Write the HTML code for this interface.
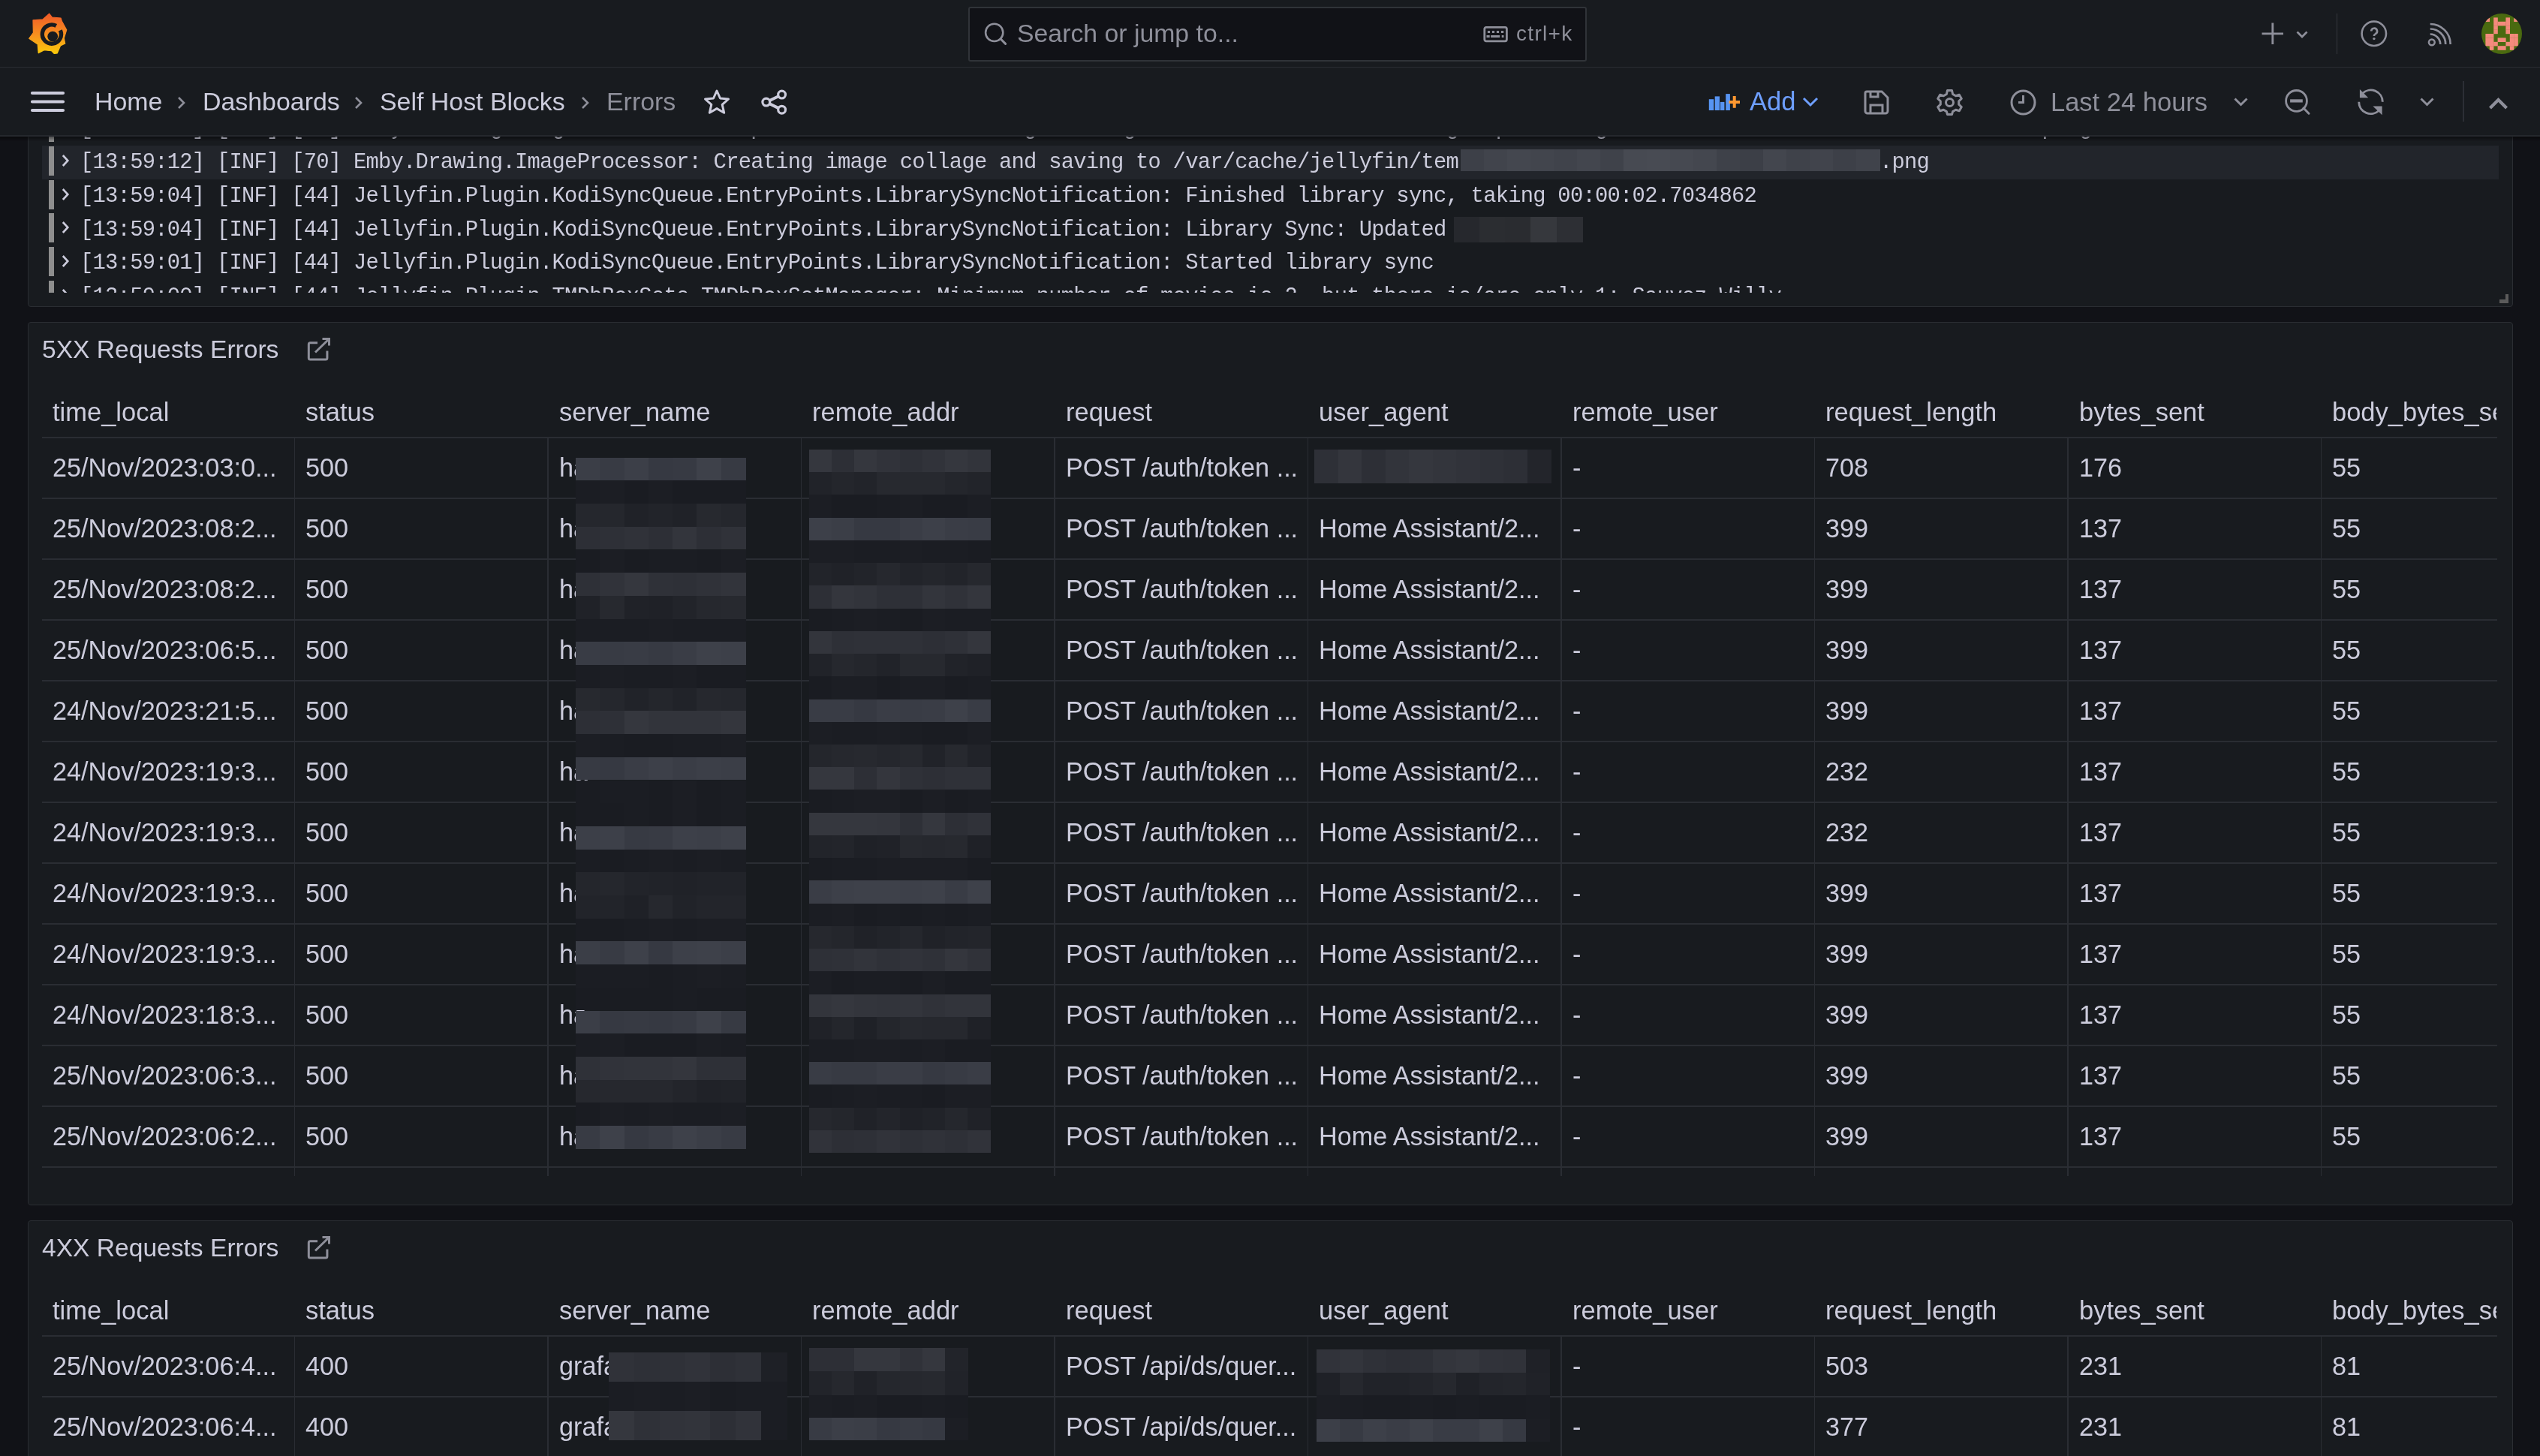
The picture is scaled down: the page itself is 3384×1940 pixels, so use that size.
<!DOCTYPE html><html><head><meta charset="utf-8"><style>html,body{margin:0;padding:0;} div{-webkit-font-smoothing:antialiased;} .t{will-change:transform;}body{width:3384px;height:1940px;overflow:hidden;position:relative;background:#111217;font-family:'Liberation Sans', sans-serif;}</style></head><body>
<div style="position:absolute;left:37px;top:60px;width:3309px;height:347px;background:#181b1f;border:1px solid #2a2d32;border-radius:4px;"></div>
<div style="position:absolute;left:0;top:181px;width:3384px;height:209px;overflow:hidden;">
<div style="position:absolute;left:65px;top:-30.72px;width:7px;height:39px;background:#8e8e8e;"></div>
<svg style="position:absolute;left:80px;top:-20.72px;" width="14" height="20" viewBox="0 0 14 20"><path d="M3.8 2 L10.3 9 L3.8 16" fill="none" stroke="#ccccdc" stroke-width="2.6"/></svg>
<div class="t" style="position:absolute;left:107.3px;top:-22.59px;font-family:'Liberation Mono', monospace;font-size:28.8px;line-height:28.8px;color:#ccccdc;white-space:pre;letter-spacing:-0.74px;">[13:59:12] [INF] [70] Emby.Drawing.ImageProcessor:    p                     g       g                         g   p       g                                   p  g</div>
<div style="position:absolute;left:56px;top:13.0px;width:3273px;height:44.72px;background:#22252b;"></div>
<div style="position:absolute;left:65px;top:14.0px;width:7px;height:39px;background:#8e8e8e;"></div>
<svg style="position:absolute;left:80px;top:24.0px;" width="14" height="20" viewBox="0 0 14 20"><path d="M3.8 2 L10.3 9 L3.8 16" fill="none" stroke="#ccccdc" stroke-width="2.6"/></svg>
<div class="t" style="position:absolute;left:107.3px;top:22.13px;font-family:'Liberation Mono', monospace;font-size:28.8px;line-height:28.8px;color:#ccccdc;white-space:pre;letter-spacing:-0.74px;">[13:59:12] [INF] [70] Emby.Drawing.ImageProcessor: Creating image collage and saving to /var/cache/jellyfin/tem</div>
<div style="position:absolute;left:1945.5px;top:17.8px;width:31.6px;height:29.7px;background:#3d4048;"></div>
<div style="position:absolute;left:1976.53px;top:17.8px;width:31.6px;height:29.7px;background:#41444c;"></div>
<div style="position:absolute;left:2007.56px;top:17.8px;width:31.6px;height:29.7px;background:#44474f;"></div>
<div style="position:absolute;left:2038.59px;top:17.8px;width:31.6px;height:29.7px;background:#42454d;"></div>
<div style="position:absolute;left:2069.62px;top:17.8px;width:31.6px;height:29.7px;background:#40434b;"></div>
<div style="position:absolute;left:2100.65px;top:17.8px;width:31.6px;height:29.7px;background:#43464e;"></div>
<div style="position:absolute;left:2131.68px;top:17.8px;width:31.6px;height:29.7px;background:#3f424a;"></div>
<div style="position:absolute;left:2162.71px;top:17.8px;width:31.6px;height:29.7px;background:#474a52;"></div>
<div style="position:absolute;left:2193.74px;top:17.8px;width:31.6px;height:29.7px;background:#484b53;"></div>
<div style="position:absolute;left:2224.77px;top:17.8px;width:31.6px;height:29.7px;background:#464951;"></div>
<div style="position:absolute;left:2255.8px;top:17.8px;width:31.6px;height:29.7px;background:#44474f;"></div>
<div style="position:absolute;left:2286.83px;top:17.8px;width:31.6px;height:29.7px;background:#3e4149;"></div>
<div style="position:absolute;left:2317.86px;top:17.8px;width:31.6px;height:29.7px;background:#3c3f47;"></div>
<div style="position:absolute;left:2348.89px;top:17.8px;width:31.6px;height:29.7px;background:#43464e;"></div>
<div style="position:absolute;left:2379.92px;top:17.8px;width:31.6px;height:29.7px;background:#3f424a;"></div>
<div style="position:absolute;left:2410.95px;top:17.8px;width:31.6px;height:29.7px;background:#41444c;"></div>
<div style="position:absolute;left:2441.98px;top:17.8px;width:31.6px;height:29.7px;background:#3d4048;"></div>
<div style="position:absolute;left:2473.01px;top:17.8px;width:31.6px;height:29.7px;background:#40434b;"></div>
<div class="t" style="position:absolute;left:2504px;top:22.13px;font-family:'Liberation Mono', monospace;font-size:28.8px;line-height:28.8px;color:#ccccdc;white-space:pre;letter-spacing:-0.74px;">.png</div>
<div style="position:absolute;left:65px;top:58.72px;width:7px;height:39px;background:#8e8e8e;"></div>
<svg style="position:absolute;left:80px;top:68.72px;" width="14" height="20" viewBox="0 0 14 20"><path d="M3.8 2 L10.3 9 L3.8 16" fill="none" stroke="#ccccdc" stroke-width="2.6"/></svg>
<div class="t" style="position:absolute;left:107.3px;top:66.85px;font-family:'Liberation Mono', monospace;font-size:28.8px;line-height:28.8px;color:#ccccdc;white-space:pre;letter-spacing:-0.74px;">[13:59:04] [INF] [44] Jellyfin.Plugin.KodiSyncQueue.EntryPoints.LibrarySyncNotification: Finished library sync, taking 00:00:02.7034862</div>
<div style="position:absolute;left:65px;top:103.44px;width:7px;height:39px;background:#8e8e8e;"></div>
<svg style="position:absolute;left:80px;top:113.44px;" width="14" height="20" viewBox="0 0 14 20"><path d="M3.8 2 L10.3 9 L3.8 16" fill="none" stroke="#ccccdc" stroke-width="2.6"/></svg>
<div class="t" style="position:absolute;left:107.3px;top:111.57px;font-family:'Liberation Mono', monospace;font-size:28.8px;line-height:28.8px;color:#ccccdc;white-space:pre;letter-spacing:-0.74px;">[13:59:04] [INF] [44] Jellyfin.Plugin.KodiSyncQueue.EntryPoints.LibrarySyncNotification: Library Sync: Updated</div>
<div style="position:absolute;left:1936.7px;top:108.14px;width:34.8px;height:33.6px;background:#26282d;"></div>
<div style="position:absolute;left:1970.96px;top:108.14px;width:34.8px;height:33.6px;background:#2b2d31;"></div>
<div style="position:absolute;left:2005.22px;top:108.14px;width:34.8px;height:33.6px;background:#2a2c30;"></div>
<div style="position:absolute;left:2039.48px;top:108.14px;width:34.8px;height:33.6px;background:#36383d;"></div>
<div style="position:absolute;left:2073.74px;top:108.14px;width:34.8px;height:33.6px;background:#2d2f34;"></div>
<div style="position:absolute;left:65px;top:148.15999999999997px;width:7px;height:39px;background:#8e8e8e;"></div>
<svg style="position:absolute;left:80px;top:158.15999999999997px;" width="14" height="20" viewBox="0 0 14 20"><path d="M3.8 2 L10.3 9 L3.8 16" fill="none" stroke="#ccccdc" stroke-width="2.6"/></svg>
<div class="t" style="position:absolute;left:107.3px;top:156.29px;font-family:'Liberation Mono', monospace;font-size:28.8px;line-height:28.8px;color:#ccccdc;white-space:pre;letter-spacing:-0.74px;">[13:59:01] [INF] [44] Jellyfin.Plugin.KodiSyncQueue.EntryPoints.LibrarySyncNotification: Started library sync</div>
<div style="position:absolute;left:65px;top:192.88px;width:7px;height:39px;background:#8e8e8e;"></div>
<svg style="position:absolute;left:80px;top:202.88px;" width="14" height="20" viewBox="0 0 14 20"><path d="M3.8 2 L10.3 9 L3.8 16" fill="none" stroke="#ccccdc" stroke-width="2.6"/></svg>
<div class="t" style="position:absolute;left:107.3px;top:201.01px;font-family:'Liberation Mono', monospace;font-size:28.8px;line-height:28.8px;color:#ccccdc;white-space:pre;letter-spacing:-0.74px;">[13:59:00] [INF] [44] Jellyfin.Plugin.TMDbBoxSets.TMDbBoxSetManager: Minimum number of movies is 2, but there is/are only 1: Sauvez Willy</div>
</div>
<div style="position:absolute;left:3338px;top:392px;width:4.2px;height:12.2px;background:#5b5b5b;"></div>
<div style="position:absolute;left:3329.8px;top:399.2px;width:12.4px;height:5px;background:#5b5b5b;"></div>
<div style="position:absolute;left:37px;top:428.7px;width:3309px;height:1175.3px;background:#181b1f;border:1px solid #2a2d32;border-radius:4px;"></div>
<div class="t" style="position:absolute;left:56.3px;top:449.06px;font-family:'Liberation Sans', sans-serif;font-size:33.6px;line-height:33.6px;color:#ccccdc;white-space:pre;">5XX Requests Errors</div>
<svg style="position:absolute;left:409px;top:449.7px;" width="32" height="32" viewBox="0 0 32 32"><path d="M14 6.8 H4.3 a2 2 0 0 0 -2 2 V27 a2 2 0 0 0 2 2 H24.9 a2 2 0 0 0 2 -2 V17.5" fill="none" stroke="#8e8f9a" stroke-width="3"/><path d="M11 19.5 L29.5 1.5 M20.5 1.5 H29.5 V10.5" fill="none" stroke="#8e8f9a" stroke-width="3"/></svg>
<div style="position:absolute;left:69.7px;top:522.0px;width:3256.3px;overflow:hidden;height:60px">
<div class="t" style="position:absolute;left:0px;top:10.00px;font-family:'Liberation Sans', sans-serif;font-size:34.5px;line-height:34.5px;color:#ccccdc;white-space:pre;">time_local</div>
</div>
<div style="position:absolute;left:407.2px;top:522.0px;width:2918.8px;overflow:hidden;height:60px">
<div class="t" style="position:absolute;left:0px;top:10.00px;font-family:'Liberation Sans', sans-serif;font-size:34.5px;line-height:34.5px;color:#ccccdc;white-space:pre;">status</div>
</div>
<div style="position:absolute;left:744.7px;top:522.0px;width:2581.3px;overflow:hidden;height:60px">
<div class="t" style="position:absolute;left:0px;top:10.00px;font-family:'Liberation Sans', sans-serif;font-size:34.5px;line-height:34.5px;color:#ccccdc;white-space:pre;">server_name</div>
</div>
<div style="position:absolute;left:1082.2px;top:522.0px;width:2243.8px;overflow:hidden;height:60px">
<div class="t" style="position:absolute;left:0px;top:10.00px;font-family:'Liberation Sans', sans-serif;font-size:34.5px;line-height:34.5px;color:#ccccdc;white-space:pre;">remote_addr</div>
</div>
<div style="position:absolute;left:1419.7px;top:522.0px;width:1906.3px;overflow:hidden;height:60px">
<div class="t" style="position:absolute;left:0px;top:10.00px;font-family:'Liberation Sans', sans-serif;font-size:34.5px;line-height:34.5px;color:#ccccdc;white-space:pre;">request</div>
</div>
<div style="position:absolute;left:1757.2px;top:522.0px;width:1568.8px;overflow:hidden;height:60px">
<div class="t" style="position:absolute;left:0px;top:10.00px;font-family:'Liberation Sans', sans-serif;font-size:34.5px;line-height:34.5px;color:#ccccdc;white-space:pre;">user_agent</div>
</div>
<div style="position:absolute;left:2094.7px;top:522.0px;width:1231.3000000000002px;overflow:hidden;height:60px">
<div class="t" style="position:absolute;left:0px;top:10.00px;font-family:'Liberation Sans', sans-serif;font-size:34.5px;line-height:34.5px;color:#ccccdc;white-space:pre;">remote_user</div>
</div>
<div style="position:absolute;left:2432.2px;top:522.0px;width:893.8000000000002px;overflow:hidden;height:60px">
<div class="t" style="position:absolute;left:0px;top:10.00px;font-family:'Liberation Sans', sans-serif;font-size:34.5px;line-height:34.5px;color:#ccccdc;white-space:pre;">request_length</div>
</div>
<div style="position:absolute;left:2769.7px;top:522.0px;width:556.3000000000002px;overflow:hidden;height:60px">
<div class="t" style="position:absolute;left:0px;top:10.00px;font-family:'Liberation Sans', sans-serif;font-size:34.5px;line-height:34.5px;color:#ccccdc;white-space:pre;">bytes_sent</div>
</div>
<div style="position:absolute;left:3107.2px;top:522.0px;width:218.80000000000018px;overflow:hidden;height:60px">
<div class="t" style="position:absolute;left:0px;top:10.00px;font-family:'Liberation Sans', sans-serif;font-size:34.5px;line-height:34.5px;color:#ccccdc;white-space:pre;">body_bytes_se</div>
</div>
<div style="position:absolute;left:56px;top:582.0px;width:3271px;height:2px;background:#2a2d33;"></div>
<div style="position:absolute;left:56px;top:662.98px;width:3271px;height:2px;background:#2a2d33;"></div>
<div class="t" style="position:absolute;left:69.7px;top:606.05px;font-family:'Liberation Sans', sans-serif;font-size:34.2px;line-height:34.2px;color:#ccccdc;white-space:pre;">25/Nov/2023:03:0...</div>
<div class="t" style="position:absolute;left:407.2px;top:606.05px;font-family:'Liberation Sans', sans-serif;font-size:34.2px;line-height:34.2px;color:#ccccdc;white-space:pre;">500</div>
<div class="t" style="position:absolute;left:744.7px;top:606.05px;font-family:'Liberation Sans', sans-serif;font-size:34.2px;line-height:34.2px;color:#ccccdc;white-space:pre;">ha</div>
<div class="t" style="position:absolute;left:1419.7px;top:606.05px;font-family:'Liberation Sans', sans-serif;font-size:34.2px;line-height:34.2px;color:#ccccdc;white-space:pre;">POST /auth/token ...</div>
<div class="t" style="position:absolute;left:2094.7px;top:606.05px;font-family:'Liberation Sans', sans-serif;font-size:34.2px;line-height:34.2px;color:#ccccdc;white-space:pre;">-</div>
<div class="t" style="position:absolute;left:2432.2px;top:606.05px;font-family:'Liberation Sans', sans-serif;font-size:34.2px;line-height:34.2px;color:#ccccdc;white-space:pre;">708</div>
<div class="t" style="position:absolute;left:2769.7px;top:606.05px;font-family:'Liberation Sans', sans-serif;font-size:34.2px;line-height:34.2px;color:#ccccdc;white-space:pre;">176</div>
<div class="t" style="position:absolute;left:3107.2px;top:606.05px;font-family:'Liberation Sans', sans-serif;font-size:34.2px;line-height:34.2px;color:#ccccdc;white-space:pre;">55</div>
<div style="position:absolute;left:56px;top:743.96px;width:3271px;height:2px;background:#2a2d33;"></div>
<div class="t" style="position:absolute;left:69.7px;top:687.03px;font-family:'Liberation Sans', sans-serif;font-size:34.2px;line-height:34.2px;color:#ccccdc;white-space:pre;">25/Nov/2023:08:2...</div>
<div class="t" style="position:absolute;left:407.2px;top:687.03px;font-family:'Liberation Sans', sans-serif;font-size:34.2px;line-height:34.2px;color:#ccccdc;white-space:pre;">500</div>
<div class="t" style="position:absolute;left:744.7px;top:687.03px;font-family:'Liberation Sans', sans-serif;font-size:34.2px;line-height:34.2px;color:#ccccdc;white-space:pre;">ha</div>
<div class="t" style="position:absolute;left:1419.7px;top:687.03px;font-family:'Liberation Sans', sans-serif;font-size:34.2px;line-height:34.2px;color:#ccccdc;white-space:pre;">POST /auth/token ...</div>
<div class="t" style="position:absolute;left:1757.2px;top:687.03px;font-family:'Liberation Sans', sans-serif;font-size:34.2px;line-height:34.2px;color:#ccccdc;white-space:pre;">Home Assistant/2...</div>
<div class="t" style="position:absolute;left:2094.7px;top:687.03px;font-family:'Liberation Sans', sans-serif;font-size:34.2px;line-height:34.2px;color:#ccccdc;white-space:pre;">-</div>
<div class="t" style="position:absolute;left:2432.2px;top:687.03px;font-family:'Liberation Sans', sans-serif;font-size:34.2px;line-height:34.2px;color:#ccccdc;white-space:pre;">399</div>
<div class="t" style="position:absolute;left:2769.7px;top:687.03px;font-family:'Liberation Sans', sans-serif;font-size:34.2px;line-height:34.2px;color:#ccccdc;white-space:pre;">137</div>
<div class="t" style="position:absolute;left:3107.2px;top:687.03px;font-family:'Liberation Sans', sans-serif;font-size:34.2px;line-height:34.2px;color:#ccccdc;white-space:pre;">55</div>
<div style="position:absolute;left:56px;top:824.94px;width:3271px;height:2px;background:#2a2d33;"></div>
<div class="t" style="position:absolute;left:69.7px;top:768.01px;font-family:'Liberation Sans', sans-serif;font-size:34.2px;line-height:34.2px;color:#ccccdc;white-space:pre;">25/Nov/2023:08:2...</div>
<div class="t" style="position:absolute;left:407.2px;top:768.01px;font-family:'Liberation Sans', sans-serif;font-size:34.2px;line-height:34.2px;color:#ccccdc;white-space:pre;">500</div>
<div class="t" style="position:absolute;left:744.7px;top:768.01px;font-family:'Liberation Sans', sans-serif;font-size:34.2px;line-height:34.2px;color:#ccccdc;white-space:pre;">ha</div>
<div class="t" style="position:absolute;left:1419.7px;top:768.01px;font-family:'Liberation Sans', sans-serif;font-size:34.2px;line-height:34.2px;color:#ccccdc;white-space:pre;">POST /auth/token ...</div>
<div class="t" style="position:absolute;left:1757.2px;top:768.01px;font-family:'Liberation Sans', sans-serif;font-size:34.2px;line-height:34.2px;color:#ccccdc;white-space:pre;">Home Assistant/2...</div>
<div class="t" style="position:absolute;left:2094.7px;top:768.01px;font-family:'Liberation Sans', sans-serif;font-size:34.2px;line-height:34.2px;color:#ccccdc;white-space:pre;">-</div>
<div class="t" style="position:absolute;left:2432.2px;top:768.01px;font-family:'Liberation Sans', sans-serif;font-size:34.2px;line-height:34.2px;color:#ccccdc;white-space:pre;">399</div>
<div class="t" style="position:absolute;left:2769.7px;top:768.01px;font-family:'Liberation Sans', sans-serif;font-size:34.2px;line-height:34.2px;color:#ccccdc;white-space:pre;">137</div>
<div class="t" style="position:absolute;left:3107.2px;top:768.01px;font-family:'Liberation Sans', sans-serif;font-size:34.2px;line-height:34.2px;color:#ccccdc;white-space:pre;">55</div>
<div style="position:absolute;left:56px;top:905.9200000000001px;width:3271px;height:2px;background:#2a2d33;"></div>
<div class="t" style="position:absolute;left:69.7px;top:848.99px;font-family:'Liberation Sans', sans-serif;font-size:34.2px;line-height:34.2px;color:#ccccdc;white-space:pre;">25/Nov/2023:06:5...</div>
<div class="t" style="position:absolute;left:407.2px;top:848.99px;font-family:'Liberation Sans', sans-serif;font-size:34.2px;line-height:34.2px;color:#ccccdc;white-space:pre;">500</div>
<div class="t" style="position:absolute;left:744.7px;top:848.99px;font-family:'Liberation Sans', sans-serif;font-size:34.2px;line-height:34.2px;color:#ccccdc;white-space:pre;">ha</div>
<div class="t" style="position:absolute;left:1419.7px;top:848.99px;font-family:'Liberation Sans', sans-serif;font-size:34.2px;line-height:34.2px;color:#ccccdc;white-space:pre;">POST /auth/token ...</div>
<div class="t" style="position:absolute;left:1757.2px;top:848.99px;font-family:'Liberation Sans', sans-serif;font-size:34.2px;line-height:34.2px;color:#ccccdc;white-space:pre;">Home Assistant/2...</div>
<div class="t" style="position:absolute;left:2094.7px;top:848.99px;font-family:'Liberation Sans', sans-serif;font-size:34.2px;line-height:34.2px;color:#ccccdc;white-space:pre;">-</div>
<div class="t" style="position:absolute;left:2432.2px;top:848.99px;font-family:'Liberation Sans', sans-serif;font-size:34.2px;line-height:34.2px;color:#ccccdc;white-space:pre;">399</div>
<div class="t" style="position:absolute;left:2769.7px;top:848.99px;font-family:'Liberation Sans', sans-serif;font-size:34.2px;line-height:34.2px;color:#ccccdc;white-space:pre;">137</div>
<div class="t" style="position:absolute;left:3107.2px;top:848.99px;font-family:'Liberation Sans', sans-serif;font-size:34.2px;line-height:34.2px;color:#ccccdc;white-space:pre;">55</div>
<div style="position:absolute;left:56px;top:986.9000000000001px;width:3271px;height:2px;background:#2a2d33;"></div>
<div class="t" style="position:absolute;left:69.7px;top:929.97px;font-family:'Liberation Sans', sans-serif;font-size:34.2px;line-height:34.2px;color:#ccccdc;white-space:pre;">24/Nov/2023:21:5...</div>
<div class="t" style="position:absolute;left:407.2px;top:929.97px;font-family:'Liberation Sans', sans-serif;font-size:34.2px;line-height:34.2px;color:#ccccdc;white-space:pre;">500</div>
<div class="t" style="position:absolute;left:744.7px;top:929.97px;font-family:'Liberation Sans', sans-serif;font-size:34.2px;line-height:34.2px;color:#ccccdc;white-space:pre;">ha</div>
<div class="t" style="position:absolute;left:1419.7px;top:929.97px;font-family:'Liberation Sans', sans-serif;font-size:34.2px;line-height:34.2px;color:#ccccdc;white-space:pre;">POST /auth/token ...</div>
<div class="t" style="position:absolute;left:1757.2px;top:929.97px;font-family:'Liberation Sans', sans-serif;font-size:34.2px;line-height:34.2px;color:#ccccdc;white-space:pre;">Home Assistant/2...</div>
<div class="t" style="position:absolute;left:2094.7px;top:929.97px;font-family:'Liberation Sans', sans-serif;font-size:34.2px;line-height:34.2px;color:#ccccdc;white-space:pre;">-</div>
<div class="t" style="position:absolute;left:2432.2px;top:929.97px;font-family:'Liberation Sans', sans-serif;font-size:34.2px;line-height:34.2px;color:#ccccdc;white-space:pre;">399</div>
<div class="t" style="position:absolute;left:2769.7px;top:929.97px;font-family:'Liberation Sans', sans-serif;font-size:34.2px;line-height:34.2px;color:#ccccdc;white-space:pre;">137</div>
<div class="t" style="position:absolute;left:3107.2px;top:929.97px;font-family:'Liberation Sans', sans-serif;font-size:34.2px;line-height:34.2px;color:#ccccdc;white-space:pre;">55</div>
<div style="position:absolute;left:56px;top:1067.88px;width:3271px;height:2px;background:#2a2d33;"></div>
<div class="t" style="position:absolute;left:69.7px;top:1010.95px;font-family:'Liberation Sans', sans-serif;font-size:34.2px;line-height:34.2px;color:#ccccdc;white-space:pre;">24/Nov/2023:19:3...</div>
<div class="t" style="position:absolute;left:407.2px;top:1010.95px;font-family:'Liberation Sans', sans-serif;font-size:34.2px;line-height:34.2px;color:#ccccdc;white-space:pre;">500</div>
<div class="t" style="position:absolute;left:744.7px;top:1010.95px;font-family:'Liberation Sans', sans-serif;font-size:34.2px;line-height:34.2px;color:#ccccdc;white-space:pre;">ha</div>
<div class="t" style="position:absolute;left:1419.7px;top:1010.95px;font-family:'Liberation Sans', sans-serif;font-size:34.2px;line-height:34.2px;color:#ccccdc;white-space:pre;">POST /auth/token ...</div>
<div class="t" style="position:absolute;left:1757.2px;top:1010.95px;font-family:'Liberation Sans', sans-serif;font-size:34.2px;line-height:34.2px;color:#ccccdc;white-space:pre;">Home Assistant/2...</div>
<div class="t" style="position:absolute;left:2094.7px;top:1010.95px;font-family:'Liberation Sans', sans-serif;font-size:34.2px;line-height:34.2px;color:#ccccdc;white-space:pre;">-</div>
<div class="t" style="position:absolute;left:2432.2px;top:1010.95px;font-family:'Liberation Sans', sans-serif;font-size:34.2px;line-height:34.2px;color:#ccccdc;white-space:pre;">232</div>
<div class="t" style="position:absolute;left:2769.7px;top:1010.95px;font-family:'Liberation Sans', sans-serif;font-size:34.2px;line-height:34.2px;color:#ccccdc;white-space:pre;">137</div>
<div class="t" style="position:absolute;left:3107.2px;top:1010.95px;font-family:'Liberation Sans', sans-serif;font-size:34.2px;line-height:34.2px;color:#ccccdc;white-space:pre;">55</div>
<div style="position:absolute;left:56px;top:1148.8600000000001px;width:3271px;height:2px;background:#2a2d33;"></div>
<div class="t" style="position:absolute;left:69.7px;top:1091.93px;font-family:'Liberation Sans', sans-serif;font-size:34.2px;line-height:34.2px;color:#ccccdc;white-space:pre;">24/Nov/2023:19:3...</div>
<div class="t" style="position:absolute;left:407.2px;top:1091.93px;font-family:'Liberation Sans', sans-serif;font-size:34.2px;line-height:34.2px;color:#ccccdc;white-space:pre;">500</div>
<div class="t" style="position:absolute;left:744.7px;top:1091.93px;font-family:'Liberation Sans', sans-serif;font-size:34.2px;line-height:34.2px;color:#ccccdc;white-space:pre;">ha</div>
<div class="t" style="position:absolute;left:1419.7px;top:1091.93px;font-family:'Liberation Sans', sans-serif;font-size:34.2px;line-height:34.2px;color:#ccccdc;white-space:pre;">POST /auth/token ...</div>
<div class="t" style="position:absolute;left:1757.2px;top:1091.93px;font-family:'Liberation Sans', sans-serif;font-size:34.2px;line-height:34.2px;color:#ccccdc;white-space:pre;">Home Assistant/2...</div>
<div class="t" style="position:absolute;left:2094.7px;top:1091.93px;font-family:'Liberation Sans', sans-serif;font-size:34.2px;line-height:34.2px;color:#ccccdc;white-space:pre;">-</div>
<div class="t" style="position:absolute;left:2432.2px;top:1091.93px;font-family:'Liberation Sans', sans-serif;font-size:34.2px;line-height:34.2px;color:#ccccdc;white-space:pre;">232</div>
<div class="t" style="position:absolute;left:2769.7px;top:1091.93px;font-family:'Liberation Sans', sans-serif;font-size:34.2px;line-height:34.2px;color:#ccccdc;white-space:pre;">137</div>
<div class="t" style="position:absolute;left:3107.2px;top:1091.93px;font-family:'Liberation Sans', sans-serif;font-size:34.2px;line-height:34.2px;color:#ccccdc;white-space:pre;">55</div>
<div style="position:absolute;left:56px;top:1229.8400000000001px;width:3271px;height:2px;background:#2a2d33;"></div>
<div class="t" style="position:absolute;left:69.7px;top:1172.91px;font-family:'Liberation Sans', sans-serif;font-size:34.2px;line-height:34.2px;color:#ccccdc;white-space:pre;">24/Nov/2023:19:3...</div>
<div class="t" style="position:absolute;left:407.2px;top:1172.91px;font-family:'Liberation Sans', sans-serif;font-size:34.2px;line-height:34.2px;color:#ccccdc;white-space:pre;">500</div>
<div class="t" style="position:absolute;left:744.7px;top:1172.91px;font-family:'Liberation Sans', sans-serif;font-size:34.2px;line-height:34.2px;color:#ccccdc;white-space:pre;">ha</div>
<div class="t" style="position:absolute;left:1419.7px;top:1172.91px;font-family:'Liberation Sans', sans-serif;font-size:34.2px;line-height:34.2px;color:#ccccdc;white-space:pre;">POST /auth/token ...</div>
<div class="t" style="position:absolute;left:1757.2px;top:1172.91px;font-family:'Liberation Sans', sans-serif;font-size:34.2px;line-height:34.2px;color:#ccccdc;white-space:pre;">Home Assistant/2...</div>
<div class="t" style="position:absolute;left:2094.7px;top:1172.91px;font-family:'Liberation Sans', sans-serif;font-size:34.2px;line-height:34.2px;color:#ccccdc;white-space:pre;">-</div>
<div class="t" style="position:absolute;left:2432.2px;top:1172.91px;font-family:'Liberation Sans', sans-serif;font-size:34.2px;line-height:34.2px;color:#ccccdc;white-space:pre;">399</div>
<div class="t" style="position:absolute;left:2769.7px;top:1172.91px;font-family:'Liberation Sans', sans-serif;font-size:34.2px;line-height:34.2px;color:#ccccdc;white-space:pre;">137</div>
<div class="t" style="position:absolute;left:3107.2px;top:1172.91px;font-family:'Liberation Sans', sans-serif;font-size:34.2px;line-height:34.2px;color:#ccccdc;white-space:pre;">55</div>
<div style="position:absolute;left:56px;top:1310.8200000000002px;width:3271px;height:2px;background:#2a2d33;"></div>
<div class="t" style="position:absolute;left:69.7px;top:1253.89px;font-family:'Liberation Sans', sans-serif;font-size:34.2px;line-height:34.2px;color:#ccccdc;white-space:pre;">24/Nov/2023:19:3...</div>
<div class="t" style="position:absolute;left:407.2px;top:1253.89px;font-family:'Liberation Sans', sans-serif;font-size:34.2px;line-height:34.2px;color:#ccccdc;white-space:pre;">500</div>
<div class="t" style="position:absolute;left:744.7px;top:1253.89px;font-family:'Liberation Sans', sans-serif;font-size:34.2px;line-height:34.2px;color:#ccccdc;white-space:pre;">ha</div>
<div class="t" style="position:absolute;left:1419.7px;top:1253.89px;font-family:'Liberation Sans', sans-serif;font-size:34.2px;line-height:34.2px;color:#ccccdc;white-space:pre;">POST /auth/token ...</div>
<div class="t" style="position:absolute;left:1757.2px;top:1253.89px;font-family:'Liberation Sans', sans-serif;font-size:34.2px;line-height:34.2px;color:#ccccdc;white-space:pre;">Home Assistant/2...</div>
<div class="t" style="position:absolute;left:2094.7px;top:1253.89px;font-family:'Liberation Sans', sans-serif;font-size:34.2px;line-height:34.2px;color:#ccccdc;white-space:pre;">-</div>
<div class="t" style="position:absolute;left:2432.2px;top:1253.89px;font-family:'Liberation Sans', sans-serif;font-size:34.2px;line-height:34.2px;color:#ccccdc;white-space:pre;">399</div>
<div class="t" style="position:absolute;left:2769.7px;top:1253.89px;font-family:'Liberation Sans', sans-serif;font-size:34.2px;line-height:34.2px;color:#ccccdc;white-space:pre;">137</div>
<div class="t" style="position:absolute;left:3107.2px;top:1253.89px;font-family:'Liberation Sans', sans-serif;font-size:34.2px;line-height:34.2px;color:#ccccdc;white-space:pre;">55</div>
<div style="position:absolute;left:56px;top:1391.8000000000002px;width:3271px;height:2px;background:#2a2d33;"></div>
<div class="t" style="position:absolute;left:69.7px;top:1334.87px;font-family:'Liberation Sans', sans-serif;font-size:34.2px;line-height:34.2px;color:#ccccdc;white-space:pre;">24/Nov/2023:18:3...</div>
<div class="t" style="position:absolute;left:407.2px;top:1334.87px;font-family:'Liberation Sans', sans-serif;font-size:34.2px;line-height:34.2px;color:#ccccdc;white-space:pre;">500</div>
<div class="t" style="position:absolute;left:744.7px;top:1334.87px;font-family:'Liberation Sans', sans-serif;font-size:34.2px;line-height:34.2px;color:#ccccdc;white-space:pre;">ha</div>
<div class="t" style="position:absolute;left:1419.7px;top:1334.87px;font-family:'Liberation Sans', sans-serif;font-size:34.2px;line-height:34.2px;color:#ccccdc;white-space:pre;">POST /auth/token ...</div>
<div class="t" style="position:absolute;left:1757.2px;top:1334.87px;font-family:'Liberation Sans', sans-serif;font-size:34.2px;line-height:34.2px;color:#ccccdc;white-space:pre;">Home Assistant/2...</div>
<div class="t" style="position:absolute;left:2094.7px;top:1334.87px;font-family:'Liberation Sans', sans-serif;font-size:34.2px;line-height:34.2px;color:#ccccdc;white-space:pre;">-</div>
<div class="t" style="position:absolute;left:2432.2px;top:1334.87px;font-family:'Liberation Sans', sans-serif;font-size:34.2px;line-height:34.2px;color:#ccccdc;white-space:pre;">399</div>
<div class="t" style="position:absolute;left:2769.7px;top:1334.87px;font-family:'Liberation Sans', sans-serif;font-size:34.2px;line-height:34.2px;color:#ccccdc;white-space:pre;">137</div>
<div class="t" style="position:absolute;left:3107.2px;top:1334.87px;font-family:'Liberation Sans', sans-serif;font-size:34.2px;line-height:34.2px;color:#ccccdc;white-space:pre;">55</div>
<div style="position:absolute;left:56px;top:1472.7800000000002px;width:3271px;height:2px;background:#2a2d33;"></div>
<div class="t" style="position:absolute;left:69.7px;top:1415.85px;font-family:'Liberation Sans', sans-serif;font-size:34.2px;line-height:34.2px;color:#ccccdc;white-space:pre;">25/Nov/2023:06:3...</div>
<div class="t" style="position:absolute;left:407.2px;top:1415.85px;font-family:'Liberation Sans', sans-serif;font-size:34.2px;line-height:34.2px;color:#ccccdc;white-space:pre;">500</div>
<div class="t" style="position:absolute;left:744.7px;top:1415.85px;font-family:'Liberation Sans', sans-serif;font-size:34.2px;line-height:34.2px;color:#ccccdc;white-space:pre;">ha</div>
<div class="t" style="position:absolute;left:1419.7px;top:1415.85px;font-family:'Liberation Sans', sans-serif;font-size:34.2px;line-height:34.2px;color:#ccccdc;white-space:pre;">POST /auth/token ...</div>
<div class="t" style="position:absolute;left:1757.2px;top:1415.85px;font-family:'Liberation Sans', sans-serif;font-size:34.2px;line-height:34.2px;color:#ccccdc;white-space:pre;">Home Assistant/2...</div>
<div class="t" style="position:absolute;left:2094.7px;top:1415.85px;font-family:'Liberation Sans', sans-serif;font-size:34.2px;line-height:34.2px;color:#ccccdc;white-space:pre;">-</div>
<div class="t" style="position:absolute;left:2432.2px;top:1415.85px;font-family:'Liberation Sans', sans-serif;font-size:34.2px;line-height:34.2px;color:#ccccdc;white-space:pre;">399</div>
<div class="t" style="position:absolute;left:2769.7px;top:1415.85px;font-family:'Liberation Sans', sans-serif;font-size:34.2px;line-height:34.2px;color:#ccccdc;white-space:pre;">137</div>
<div class="t" style="position:absolute;left:3107.2px;top:1415.85px;font-family:'Liberation Sans', sans-serif;font-size:34.2px;line-height:34.2px;color:#ccccdc;white-space:pre;">55</div>
<div style="position:absolute;left:56px;top:1553.7600000000002px;width:3271px;height:2px;background:#2a2d33;"></div>
<div class="t" style="position:absolute;left:69.7px;top:1496.83px;font-family:'Liberation Sans', sans-serif;font-size:34.2px;line-height:34.2px;color:#ccccdc;white-space:pre;">25/Nov/2023:06:2...</div>
<div class="t" style="position:absolute;left:407.2px;top:1496.83px;font-family:'Liberation Sans', sans-serif;font-size:34.2px;line-height:34.2px;color:#ccccdc;white-space:pre;">500</div>
<div class="t" style="position:absolute;left:744.7px;top:1496.83px;font-family:'Liberation Sans', sans-serif;font-size:34.2px;line-height:34.2px;color:#ccccdc;white-space:pre;">ha</div>
<div class="t" style="position:absolute;left:1419.7px;top:1496.83px;font-family:'Liberation Sans', sans-serif;font-size:34.2px;line-height:34.2px;color:#ccccdc;white-space:pre;">POST /auth/token ...</div>
<div class="t" style="position:absolute;left:1757.2px;top:1496.83px;font-family:'Liberation Sans', sans-serif;font-size:34.2px;line-height:34.2px;color:#ccccdc;white-space:pre;">Home Assistant/2...</div>
<div class="t" style="position:absolute;left:2094.7px;top:1496.83px;font-family:'Liberation Sans', sans-serif;font-size:34.2px;line-height:34.2px;color:#ccccdc;white-space:pre;">-</div>
<div class="t" style="position:absolute;left:2432.2px;top:1496.83px;font-family:'Liberation Sans', sans-serif;font-size:34.2px;line-height:34.2px;color:#ccccdc;white-space:pre;">399</div>
<div class="t" style="position:absolute;left:2769.7px;top:1496.83px;font-family:'Liberation Sans', sans-serif;font-size:34.2px;line-height:34.2px;color:#ccccdc;white-space:pre;">137</div>
<div class="t" style="position:absolute;left:3107.2px;top:1496.83px;font-family:'Liberation Sans', sans-serif;font-size:34.2px;line-height:34.2px;color:#ccccdc;white-space:pre;">55</div>
<div style="position:absolute;left:391.59999999999997px;top:583.0px;width:1.5px;height:983.76px;background:#2a2d33;"></div>
<div style="position:absolute;left:729.1px;top:583.0px;width:1.5px;height:983.76px;background:#2a2d33;"></div>
<div style="position:absolute;left:1066.6000000000001px;top:583.0px;width:1.5px;height:983.76px;background:#2a2d33;"></div>
<div style="position:absolute;left:1404.1000000000001px;top:583.0px;width:1.5px;height:983.76px;background:#2a2d33;"></div>
<div style="position:absolute;left:1741.6000000000001px;top:583.0px;width:1.5px;height:983.76px;background:#2a2d33;"></div>
<div style="position:absolute;left:2079.1px;top:583.0px;width:1.5px;height:983.76px;background:#2a2d33;"></div>
<div style="position:absolute;left:2416.6px;top:583.0px;width:1.5px;height:983.76px;background:#2a2d33;"></div>
<div style="position:absolute;left:2754.1px;top:583.0px;width:1.5px;height:983.76px;background:#2a2d33;"></div>
<div style="position:absolute;left:3091.6px;top:583.0px;width:1.5px;height:983.76px;background:#2a2d33;"></div>
<div style="position:absolute;left:37px;top:1626px;width:3309px;height:472px;background:#181b1f;border:1px solid #2a2d32;border-radius:4px;"></div>
<div class="t" style="position:absolute;left:56.3px;top:1646.36px;font-family:'Liberation Sans', sans-serif;font-size:33.6px;line-height:33.6px;color:#ccccdc;white-space:pre;">4XX Requests Errors</div>
<svg style="position:absolute;left:409px;top:1647px;" width="32" height="32" viewBox="0 0 32 32"><path d="M14 6.8 H4.3 a2 2 0 0 0 -2 2 V27 a2 2 0 0 0 2 2 H24.9 a2 2 0 0 0 2 -2 V17.5" fill="none" stroke="#8e8f9a" stroke-width="3"/><path d="M11 19.5 L29.5 1.5 M20.5 1.5 H29.5 V10.5" fill="none" stroke="#8e8f9a" stroke-width="3"/></svg>
<div style="position:absolute;left:69.7px;top:1719.2px;width:3256.3px;overflow:hidden;height:60px">
<div class="t" style="position:absolute;left:0px;top:10.00px;font-family:'Liberation Sans', sans-serif;font-size:34.5px;line-height:34.5px;color:#ccccdc;white-space:pre;">time_local</div>
</div>
<div style="position:absolute;left:407.2px;top:1719.2px;width:2918.8px;overflow:hidden;height:60px">
<div class="t" style="position:absolute;left:0px;top:10.00px;font-family:'Liberation Sans', sans-serif;font-size:34.5px;line-height:34.5px;color:#ccccdc;white-space:pre;">status</div>
</div>
<div style="position:absolute;left:744.7px;top:1719.2px;width:2581.3px;overflow:hidden;height:60px">
<div class="t" style="position:absolute;left:0px;top:10.00px;font-family:'Liberation Sans', sans-serif;font-size:34.5px;line-height:34.5px;color:#ccccdc;white-space:pre;">server_name</div>
</div>
<div style="position:absolute;left:1082.2px;top:1719.2px;width:2243.8px;overflow:hidden;height:60px">
<div class="t" style="position:absolute;left:0px;top:10.00px;font-family:'Liberation Sans', sans-serif;font-size:34.5px;line-height:34.5px;color:#ccccdc;white-space:pre;">remote_addr</div>
</div>
<div style="position:absolute;left:1419.7px;top:1719.2px;width:1906.3px;overflow:hidden;height:60px">
<div class="t" style="position:absolute;left:0px;top:10.00px;font-family:'Liberation Sans', sans-serif;font-size:34.5px;line-height:34.5px;color:#ccccdc;white-space:pre;">request</div>
</div>
<div style="position:absolute;left:1757.2px;top:1719.2px;width:1568.8px;overflow:hidden;height:60px">
<div class="t" style="position:absolute;left:0px;top:10.00px;font-family:'Liberation Sans', sans-serif;font-size:34.5px;line-height:34.5px;color:#ccccdc;white-space:pre;">user_agent</div>
</div>
<div style="position:absolute;left:2094.7px;top:1719.2px;width:1231.3000000000002px;overflow:hidden;height:60px">
<div class="t" style="position:absolute;left:0px;top:10.00px;font-family:'Liberation Sans', sans-serif;font-size:34.5px;line-height:34.5px;color:#ccccdc;white-space:pre;">remote_user</div>
</div>
<div style="position:absolute;left:2432.2px;top:1719.2px;width:893.8000000000002px;overflow:hidden;height:60px">
<div class="t" style="position:absolute;left:0px;top:10.00px;font-family:'Liberation Sans', sans-serif;font-size:34.5px;line-height:34.5px;color:#ccccdc;white-space:pre;">request_length</div>
</div>
<div style="position:absolute;left:2769.7px;top:1719.2px;width:556.3000000000002px;overflow:hidden;height:60px">
<div class="t" style="position:absolute;left:0px;top:10.00px;font-family:'Liberation Sans', sans-serif;font-size:34.5px;line-height:34.5px;color:#ccccdc;white-space:pre;">bytes_sent</div>
</div>
<div style="position:absolute;left:3107.2px;top:1719.2px;width:218.80000000000018px;overflow:hidden;height:60px">
<div class="t" style="position:absolute;left:0px;top:10.00px;font-family:'Liberation Sans', sans-serif;font-size:34.5px;line-height:34.5px;color:#ccccdc;white-space:pre;">body_bytes_se</div>
</div>
<div style="position:absolute;left:56px;top:1779.2px;width:3271px;height:2px;background:#2a2d33;"></div>
<div style="position:absolute;left:56px;top:1860.18px;width:3271px;height:2px;background:#2a2d33;"></div>
<div class="t" style="position:absolute;left:69.7px;top:1803.25px;font-family:'Liberation Sans', sans-serif;font-size:34.2px;line-height:34.2px;color:#ccccdc;white-space:pre;">25/Nov/2023:06:4...</div>
<div class="t" style="position:absolute;left:407.2px;top:1803.25px;font-family:'Liberation Sans', sans-serif;font-size:34.2px;line-height:34.2px;color:#ccccdc;white-space:pre;">400</div>
<div class="t" style="position:absolute;left:744.7px;top:1803.25px;font-family:'Liberation Sans', sans-serif;font-size:34.2px;line-height:34.2px;color:#ccccdc;white-space:pre;">grafa</div>
<div class="t" style="position:absolute;left:1419.7px;top:1803.25px;font-family:'Liberation Sans', sans-serif;font-size:34.2px;line-height:34.2px;color:#ccccdc;white-space:pre;">POST /api/ds/quer...</div>
<div class="t" style="position:absolute;left:2094.7px;top:1803.25px;font-family:'Liberation Sans', sans-serif;font-size:34.2px;line-height:34.2px;color:#ccccdc;white-space:pre;">-</div>
<div class="t" style="position:absolute;left:2432.2px;top:1803.25px;font-family:'Liberation Sans', sans-serif;font-size:34.2px;line-height:34.2px;color:#ccccdc;white-space:pre;">503</div>
<div class="t" style="position:absolute;left:2769.7px;top:1803.25px;font-family:'Liberation Sans', sans-serif;font-size:34.2px;line-height:34.2px;color:#ccccdc;white-space:pre;">231</div>
<div class="t" style="position:absolute;left:3107.2px;top:1803.25px;font-family:'Liberation Sans', sans-serif;font-size:34.2px;line-height:34.2px;color:#ccccdc;white-space:pre;">81</div>
<div style="position:absolute;left:56px;top:1941.16px;width:3271px;height:2px;background:#2a2d33;"></div>
<div class="t" style="position:absolute;left:69.7px;top:1884.23px;font-family:'Liberation Sans', sans-serif;font-size:34.2px;line-height:34.2px;color:#ccccdc;white-space:pre;">25/Nov/2023:06:4...</div>
<div class="t" style="position:absolute;left:407.2px;top:1884.23px;font-family:'Liberation Sans', sans-serif;font-size:34.2px;line-height:34.2px;color:#ccccdc;white-space:pre;">400</div>
<div class="t" style="position:absolute;left:744.7px;top:1884.23px;font-family:'Liberation Sans', sans-serif;font-size:34.2px;line-height:34.2px;color:#ccccdc;white-space:pre;">grafa</div>
<div class="t" style="position:absolute;left:1419.7px;top:1884.23px;font-family:'Liberation Sans', sans-serif;font-size:34.2px;line-height:34.2px;color:#ccccdc;white-space:pre;">POST /api/ds/quer...</div>
<div class="t" style="position:absolute;left:2094.7px;top:1884.23px;font-family:'Liberation Sans', sans-serif;font-size:34.2px;line-height:34.2px;color:#ccccdc;white-space:pre;">-</div>
<div class="t" style="position:absolute;left:2432.2px;top:1884.23px;font-family:'Liberation Sans', sans-serif;font-size:34.2px;line-height:34.2px;color:#ccccdc;white-space:pre;">377</div>
<div class="t" style="position:absolute;left:2769.7px;top:1884.23px;font-family:'Liberation Sans', sans-serif;font-size:34.2px;line-height:34.2px;color:#ccccdc;white-space:pre;">231</div>
<div class="t" style="position:absolute;left:3107.2px;top:1884.23px;font-family:'Liberation Sans', sans-serif;font-size:34.2px;line-height:34.2px;color:#ccccdc;white-space:pre;">81</div>
<div style="position:absolute;left:391.59999999999997px;top:1780.2px;width:1.5px;height:159.79999999999995px;background:#2a2d33;"></div>
<div style="position:absolute;left:729.1px;top:1780.2px;width:1.5px;height:159.79999999999995px;background:#2a2d33;"></div>
<div style="position:absolute;left:1066.6000000000001px;top:1780.2px;width:1.5px;height:159.79999999999995px;background:#2a2d33;"></div>
<div style="position:absolute;left:1404.1000000000001px;top:1780.2px;width:1.5px;height:159.79999999999995px;background:#2a2d33;"></div>
<div style="position:absolute;left:1741.6000000000001px;top:1780.2px;width:1.5px;height:159.79999999999995px;background:#2a2d33;"></div>
<div style="position:absolute;left:2079.1px;top:1780.2px;width:1.5px;height:159.79999999999995px;background:#2a2d33;"></div>
<div style="position:absolute;left:2416.6px;top:1780.2px;width:1.5px;height:159.79999999999995px;background:#2a2d33;"></div>
<div style="position:absolute;left:2754.1px;top:1780.2px;width:1.5px;height:159.79999999999995px;background:#2a2d33;"></div>
<div style="position:absolute;left:3091.6px;top:1780.2px;width:1.5px;height:159.79999999999995px;background:#2a2d33;"></div>
<div style="position:absolute;left:767.0px;top:609.7px;width:32.89px;height:30.7px;background:#3b3e47;"></div>
<div style="position:absolute;left:799.29px;top:609.7px;width:32.89px;height:30.7px;background:#383b44;"></div>
<div style="position:absolute;left:831.57px;top:609.7px;width:32.89px;height:30.7px;background:#3c3f48;"></div>
<div style="position:absolute;left:863.86px;top:609.7px;width:32.89px;height:30.7px;background:#363942;"></div>
<div style="position:absolute;left:896.14px;top:609.7px;width:32.89px;height:30.7px;background:#373a43;"></div>
<div style="position:absolute;left:928.43px;top:609.7px;width:32.89px;height:30.7px;background:#3e414a;"></div>
<div style="position:absolute;left:960.71px;top:609.7px;width:32.89px;height:30.7px;background:#373a43;"></div>
<div style="position:absolute;left:767.0px;top:640.4px;width:32.89px;height:30.7px;background:#1b1d23;"></div>
<div style="position:absolute;left:799.29px;top:640.4px;width:32.89px;height:30.7px;background:#1c1e24;"></div>
<div style="position:absolute;left:831.57px;top:640.4px;width:32.89px;height:30.7px;background:#1a1c22;"></div>
<div style="position:absolute;left:863.86px;top:640.4px;width:32.89px;height:30.7px;background:#1c1e24;"></div>
<div style="position:absolute;left:896.14px;top:640.4px;width:32.89px;height:30.7px;background:#1a1c22;"></div>
<div style="position:absolute;left:928.43px;top:640.4px;width:32.89px;height:30.7px;background:#1a1c22;"></div>
<div style="position:absolute;left:960.71px;top:640.4px;width:32.89px;height:30.7px;background:#1a1c22;"></div>
<div style="position:absolute;left:767.0px;top:671.1px;width:32.89px;height:30.7px;background:#25272d;"></div>
<div style="position:absolute;left:799.29px;top:671.1px;width:32.89px;height:30.7px;background:#25272d;"></div>
<div style="position:absolute;left:831.57px;top:671.1px;width:32.89px;height:30.7px;background:#202228;"></div>
<div style="position:absolute;left:863.86px;top:671.1px;width:32.89px;height:30.7px;background:#22242a;"></div>
<div style="position:absolute;left:896.14px;top:671.1px;width:32.89px;height:30.7px;background:#202228;"></div>
<div style="position:absolute;left:928.43px;top:671.1px;width:32.89px;height:30.7px;background:#27292f;"></div>
<div style="position:absolute;left:960.71px;top:671.1px;width:32.89px;height:30.7px;background:#25272d;"></div>
<div style="position:absolute;left:767.0px;top:701.8px;width:32.89px;height:30.7px;background:#2d2f36;"></div>
<div style="position:absolute;left:799.29px;top:701.8px;width:32.89px;height:30.7px;background:#2e3037;"></div>
<div style="position:absolute;left:831.57px;top:701.8px;width:32.89px;height:30.7px;background:#303239;"></div>
<div style="position:absolute;left:863.86px;top:701.8px;width:32.89px;height:30.7px;background:#2d2f36;"></div>
<div style="position:absolute;left:896.14px;top:701.8px;width:32.89px;height:30.7px;background:#33353c;"></div>
<div style="position:absolute;left:928.43px;top:701.8px;width:32.89px;height:30.7px;background:#2d2f36;"></div>
<div style="position:absolute;left:960.71px;top:701.8px;width:32.89px;height:30.7px;background:#303239;"></div>
<div style="position:absolute;left:767.0px;top:732.5px;width:32.89px;height:30.7px;background:#1a1c22;"></div>
<div style="position:absolute;left:799.29px;top:732.5px;width:32.89px;height:30.7px;background:#1c1e24;"></div>
<div style="position:absolute;left:831.57px;top:732.5px;width:32.89px;height:30.7px;background:#1a1c22;"></div>
<div style="position:absolute;left:863.86px;top:732.5px;width:32.89px;height:30.7px;background:#1b1d23;"></div>
<div style="position:absolute;left:896.14px;top:732.5px;width:32.89px;height:30.7px;background:#1b1d23;"></div>
<div style="position:absolute;left:928.43px;top:732.5px;width:32.89px;height:30.7px;background:#1a1c22;"></div>
<div style="position:absolute;left:960.71px;top:732.5px;width:32.89px;height:30.7px;background:#1c1e24;"></div>
<div style="position:absolute;left:767.0px;top:763.2px;width:32.89px;height:30.7px;background:#2e3037;"></div>
<div style="position:absolute;left:799.29px;top:763.2px;width:32.89px;height:30.7px;background:#31333a;"></div>
<div style="position:absolute;left:831.57px;top:763.2px;width:32.89px;height:30.7px;background:#35373e;"></div>
<div style="position:absolute;left:863.86px;top:763.2px;width:32.89px;height:30.7px;background:#2f3138;"></div>
<div style="position:absolute;left:896.14px;top:763.2px;width:32.89px;height:30.7px;background:#2e3037;"></div>
<div style="position:absolute;left:928.43px;top:763.2px;width:32.89px;height:30.7px;background:#303239;"></div>
<div style="position:absolute;left:960.71px;top:763.2px;width:32.89px;height:30.7px;background:#32343b;"></div>
<div style="position:absolute;left:767.0px;top:793.9px;width:32.89px;height:30.7px;background:#202228;"></div>
<div style="position:absolute;left:799.29px;top:793.9px;width:32.89px;height:30.7px;background:#27292f;"></div>
<div style="position:absolute;left:831.57px;top:793.9px;width:32.89px;height:30.7px;background:#202228;"></div>
<div style="position:absolute;left:863.86px;top:793.9px;width:32.89px;height:30.7px;background:#1f2127;"></div>
<div style="position:absolute;left:896.14px;top:793.9px;width:32.89px;height:30.7px;background:#22242a;"></div>
<div style="position:absolute;left:928.43px;top:793.9px;width:32.89px;height:30.7px;background:#26282e;"></div>
<div style="position:absolute;left:960.71px;top:793.9px;width:32.89px;height:30.7px;background:#27292f;"></div>
<div style="position:absolute;left:767.0px;top:824.6px;width:32.89px;height:30.7px;background:#1b1d23;"></div>
<div style="position:absolute;left:799.29px;top:824.6px;width:32.89px;height:30.7px;background:#1b1d23;"></div>
<div style="position:absolute;left:831.57px;top:824.6px;width:32.89px;height:30.7px;background:#1b1d23;"></div>
<div style="position:absolute;left:863.86px;top:824.6px;width:32.89px;height:30.7px;background:#1c1e24;"></div>
<div style="position:absolute;left:896.14px;top:824.6px;width:32.89px;height:30.7px;background:#1b1d23;"></div>
<div style="position:absolute;left:928.43px;top:824.6px;width:32.89px;height:30.7px;background:#1b1d23;"></div>
<div style="position:absolute;left:960.71px;top:824.6px;width:32.89px;height:30.7px;background:#1b1d23;"></div>
<div style="position:absolute;left:767.0px;top:855.3px;width:32.89px;height:30.7px;background:#393c45;"></div>
<div style="position:absolute;left:799.29px;top:855.3px;width:32.89px;height:30.7px;background:#383b44;"></div>
<div style="position:absolute;left:831.57px;top:855.3px;width:32.89px;height:30.7px;background:#393c45;"></div>
<div style="position:absolute;left:863.86px;top:855.3px;width:32.89px;height:30.7px;background:#373a43;"></div>
<div style="position:absolute;left:896.14px;top:855.3px;width:32.89px;height:30.7px;background:#3a3d46;"></div>
<div style="position:absolute;left:928.43px;top:855.3px;width:32.89px;height:30.7px;background:#3e414a;"></div>
<div style="position:absolute;left:960.71px;top:855.3px;width:32.89px;height:30.7px;background:#3d4049;"></div>
<div style="position:absolute;left:767.0px;top:886.0px;width:32.89px;height:30.7px;background:#1b1d23;"></div>
<div style="position:absolute;left:799.29px;top:886.0px;width:32.89px;height:30.7px;background:#1c1e24;"></div>
<div style="position:absolute;left:831.57px;top:886.0px;width:32.89px;height:30.7px;background:#1b1d23;"></div>
<div style="position:absolute;left:863.86px;top:886.0px;width:32.89px;height:30.7px;background:#1b1d23;"></div>
<div style="position:absolute;left:896.14px;top:886.0px;width:32.89px;height:30.7px;background:#1c1e24;"></div>
<div style="position:absolute;left:928.43px;top:886.0px;width:32.89px;height:30.7px;background:#1a1c22;"></div>
<div style="position:absolute;left:960.71px;top:886.0px;width:32.89px;height:30.7px;background:#1a1c22;"></div>
<div style="position:absolute;left:767.0px;top:916.7px;width:32.89px;height:30.7px;background:#27292f;"></div>
<div style="position:absolute;left:799.29px;top:916.7px;width:32.89px;height:30.7px;background:#25272d;"></div>
<div style="position:absolute;left:831.57px;top:916.7px;width:32.89px;height:30.7px;background:#212329;"></div>
<div style="position:absolute;left:863.86px;top:916.7px;width:32.89px;height:30.7px;background:#24262c;"></div>
<div style="position:absolute;left:896.14px;top:916.7px;width:32.89px;height:30.7px;background:#212329;"></div>
<div style="position:absolute;left:928.43px;top:916.7px;width:32.89px;height:30.7px;background:#26282e;"></div>
<div style="position:absolute;left:960.71px;top:916.7px;width:32.89px;height:30.7px;background:#25272d;"></div>
<div style="position:absolute;left:767.0px;top:947.4px;width:32.89px;height:30.7px;background:#2d2f36;"></div>
<div style="position:absolute;left:799.29px;top:947.4px;width:32.89px;height:30.7px;background:#2e3037;"></div>
<div style="position:absolute;left:831.57px;top:947.4px;width:32.89px;height:30.7px;background:#35373e;"></div>
<div style="position:absolute;left:863.86px;top:947.4px;width:32.89px;height:30.7px;background:#32343b;"></div>
<div style="position:absolute;left:896.14px;top:947.4px;width:32.89px;height:30.7px;background:#32343b;"></div>
<div style="position:absolute;left:928.43px;top:947.4px;width:32.89px;height:30.7px;background:#32343b;"></div>
<div style="position:absolute;left:960.71px;top:947.4px;width:32.89px;height:30.7px;background:#34363d;"></div>
<div style="position:absolute;left:767.0px;top:978.1px;width:32.89px;height:30.7px;background:#1c1e24;"></div>
<div style="position:absolute;left:799.29px;top:978.1px;width:32.89px;height:30.7px;background:#1b1d23;"></div>
<div style="position:absolute;left:831.57px;top:978.1px;width:32.89px;height:30.7px;background:#1a1c22;"></div>
<div style="position:absolute;left:863.86px;top:978.1px;width:32.89px;height:30.7px;background:#1a1c22;"></div>
<div style="position:absolute;left:896.14px;top:978.1px;width:32.89px;height:30.7px;background:#1b1d23;"></div>
<div style="position:absolute;left:928.43px;top:978.1px;width:32.89px;height:30.7px;background:#1b1d23;"></div>
<div style="position:absolute;left:960.71px;top:978.1px;width:32.89px;height:30.7px;background:#1c1e24;"></div>
<div style="position:absolute;left:767.0px;top:1008.8px;width:32.89px;height:30.7px;background:#373a43;"></div>
<div style="position:absolute;left:799.29px;top:1008.8px;width:32.89px;height:30.7px;background:#363942;"></div>
<div style="position:absolute;left:831.57px;top:1008.8px;width:32.89px;height:30.7px;background:#3a3d46;"></div>
<div style="position:absolute;left:863.86px;top:1008.8px;width:32.89px;height:30.7px;background:#3d4049;"></div>
<div style="position:absolute;left:896.14px;top:1008.8px;width:32.89px;height:30.7px;background:#3a3d46;"></div>
<div style="position:absolute;left:928.43px;top:1008.8px;width:32.89px;height:30.7px;background:#3c3f48;"></div>
<div style="position:absolute;left:960.71px;top:1008.8px;width:32.89px;height:30.7px;background:#3b3e47;"></div>
<div style="position:absolute;left:767.0px;top:1039.5px;width:32.89px;height:30.7px;background:#1a1c22;"></div>
<div style="position:absolute;left:799.29px;top:1039.5px;width:32.89px;height:30.7px;background:#1b1d23;"></div>
<div style="position:absolute;left:831.57px;top:1039.5px;width:32.89px;height:30.7px;background:#1b1d23;"></div>
<div style="position:absolute;left:863.86px;top:1039.5px;width:32.89px;height:30.7px;background:#1a1c22;"></div>
<div style="position:absolute;left:896.14px;top:1039.5px;width:32.89px;height:30.7px;background:#1c1e24;"></div>
<div style="position:absolute;left:928.43px;top:1039.5px;width:32.89px;height:30.7px;background:#1a1c22;"></div>
<div style="position:absolute;left:960.71px;top:1039.5px;width:32.89px;height:30.7px;background:#1b1d23;"></div>
<div style="position:absolute;left:767.0px;top:1070.2px;width:32.89px;height:30.7px;background:#1a1c22;"></div>
<div style="position:absolute;left:799.29px;top:1070.2px;width:32.89px;height:30.7px;background:#1a1c22;"></div>
<div style="position:absolute;left:831.57px;top:1070.2px;width:32.89px;height:30.7px;background:#1b1d23;"></div>
<div style="position:absolute;left:863.86px;top:1070.2px;width:32.89px;height:30.7px;background:#1a1c22;"></div>
<div style="position:absolute;left:896.14px;top:1070.2px;width:32.89px;height:30.7px;background:#1c1e24;"></div>
<div style="position:absolute;left:928.43px;top:1070.2px;width:32.89px;height:30.7px;background:#1a1c22;"></div>
<div style="position:absolute;left:960.71px;top:1070.2px;width:32.89px;height:30.7px;background:#1b1d23;"></div>
<div style="position:absolute;left:767.0px;top:1100.9px;width:32.89px;height:30.7px;background:#3c3f48;"></div>
<div style="position:absolute;left:799.29px;top:1100.9px;width:32.89px;height:30.7px;background:#3d4049;"></div>
<div style="position:absolute;left:831.57px;top:1100.9px;width:32.89px;height:30.7px;background:#373a43;"></div>
<div style="position:absolute;left:863.86px;top:1100.9px;width:32.89px;height:30.7px;background:#383b44;"></div>
<div style="position:absolute;left:896.14px;top:1100.9px;width:32.89px;height:30.7px;background:#3d4049;"></div>
<div style="position:absolute;left:928.43px;top:1100.9px;width:32.89px;height:30.7px;background:#3c3f48;"></div>
<div style="position:absolute;left:960.71px;top:1100.9px;width:32.89px;height:30.7px;background:#3e414a;"></div>
<div style="position:absolute;left:767.0px;top:1131.6px;width:32.89px;height:30.7px;background:#1b1d23;"></div>
<div style="position:absolute;left:799.29px;top:1131.6px;width:32.89px;height:30.7px;background:#1a1c22;"></div>
<div style="position:absolute;left:831.57px;top:1131.6px;width:32.89px;height:30.7px;background:#1b1d23;"></div>
<div style="position:absolute;left:863.86px;top:1131.6px;width:32.89px;height:30.7px;background:#1c1e24;"></div>
<div style="position:absolute;left:896.14px;top:1131.6px;width:32.89px;height:30.7px;background:#1b1d23;"></div>
<div style="position:absolute;left:928.43px;top:1131.6px;width:32.89px;height:30.7px;background:#1c1e24;"></div>
<div style="position:absolute;left:960.71px;top:1131.6px;width:32.89px;height:30.7px;background:#1b1d23;"></div>
<div style="position:absolute;left:767.0px;top:1162.3px;width:32.89px;height:30.7px;background:#24262c;"></div>
<div style="position:absolute;left:799.29px;top:1162.3px;width:32.89px;height:30.7px;background:#25272d;"></div>
<div style="position:absolute;left:831.57px;top:1162.3px;width:32.89px;height:30.7px;background:#22242a;"></div>
<div style="position:absolute;left:863.86px;top:1162.3px;width:32.89px;height:30.7px;background:#212329;"></div>
<div style="position:absolute;left:896.14px;top:1162.3px;width:32.89px;height:30.7px;background:#202228;"></div>
<div style="position:absolute;left:928.43px;top:1162.3px;width:32.89px;height:30.7px;background:#212329;"></div>
<div style="position:absolute;left:960.71px;top:1162.3px;width:32.89px;height:30.7px;background:#212329;"></div>
<div style="position:absolute;left:767.0px;top:1193.0px;width:32.89px;height:30.7px;background:#22242a;"></div>
<div style="position:absolute;left:799.29px;top:1193.0px;width:32.89px;height:30.7px;background:#22242a;"></div>
<div style="position:absolute;left:831.57px;top:1193.0px;width:32.89px;height:30.7px;background:#1f2127;"></div>
<div style="position:absolute;left:863.86px;top:1193.0px;width:32.89px;height:30.7px;background:#26282e;"></div>
<div style="position:absolute;left:896.14px;top:1193.0px;width:32.89px;height:30.7px;background:#212329;"></div>
<div style="position:absolute;left:928.43px;top:1193.0px;width:32.89px;height:30.7px;background:#23252b;"></div>
<div style="position:absolute;left:960.71px;top:1193.0px;width:32.89px;height:30.7px;background:#23252b;"></div>
<div style="position:absolute;left:767.0px;top:1223.7px;width:32.89px;height:30.7px;background:#1a1c22;"></div>
<div style="position:absolute;left:799.29px;top:1223.7px;width:32.89px;height:30.7px;background:#1a1c22;"></div>
<div style="position:absolute;left:831.57px;top:1223.7px;width:32.89px;height:30.7px;background:#1b1d23;"></div>
<div style="position:absolute;left:863.86px;top:1223.7px;width:32.89px;height:30.7px;background:#1c1e24;"></div>
<div style="position:absolute;left:896.14px;top:1223.7px;width:32.89px;height:30.7px;background:#1b1d23;"></div>
<div style="position:absolute;left:928.43px;top:1223.7px;width:32.89px;height:30.7px;background:#1c1e24;"></div>
<div style="position:absolute;left:960.71px;top:1223.7px;width:32.89px;height:30.7px;background:#1c1e24;"></div>
<div style="position:absolute;left:767.0px;top:1254.4px;width:32.89px;height:30.7px;background:#3b3e47;"></div>
<div style="position:absolute;left:799.29px;top:1254.4px;width:32.89px;height:30.7px;background:#383b44;"></div>
<div style="position:absolute;left:831.57px;top:1254.4px;width:32.89px;height:30.7px;background:#3e414a;"></div>
<div style="position:absolute;left:863.86px;top:1254.4px;width:32.89px;height:30.7px;background:#363942;"></div>
<div style="position:absolute;left:896.14px;top:1254.4px;width:32.89px;height:30.7px;background:#3d4049;"></div>
<div style="position:absolute;left:928.43px;top:1254.4px;width:32.89px;height:30.7px;background:#3e414a;"></div>
<div style="position:absolute;left:960.71px;top:1254.4px;width:32.89px;height:30.7px;background:#3c3f48;"></div>
<div style="position:absolute;left:767.0px;top:1285.1px;width:32.89px;height:30.7px;background:#1b1d23;"></div>
<div style="position:absolute;left:799.29px;top:1285.1px;width:32.89px;height:30.7px;background:#1b1d23;"></div>
<div style="position:absolute;left:831.57px;top:1285.1px;width:32.89px;height:30.7px;background:#1b1d23;"></div>
<div style="position:absolute;left:863.86px;top:1285.1px;width:32.89px;height:30.7px;background:#1a1c22;"></div>
<div style="position:absolute;left:896.14px;top:1285.1px;width:32.89px;height:30.7px;background:#1b1d23;"></div>
<div style="position:absolute;left:928.43px;top:1285.1px;width:32.89px;height:30.7px;background:#1c1e24;"></div>
<div style="position:absolute;left:960.71px;top:1285.1px;width:32.89px;height:30.7px;background:#1b1d23;"></div>
<div style="position:absolute;left:767.0px;top:1315.8px;width:32.89px;height:30.7px;background:#1a1c22;"></div>
<div style="position:absolute;left:799.29px;top:1315.8px;width:32.89px;height:30.7px;background:#1a1c22;"></div>
<div style="position:absolute;left:831.57px;top:1315.8px;width:32.89px;height:30.7px;background:#1a1c22;"></div>
<div style="position:absolute;left:863.86px;top:1315.8px;width:32.89px;height:30.7px;background:#1a1c22;"></div>
<div style="position:absolute;left:896.14px;top:1315.8px;width:32.89px;height:30.7px;background:#1b1d23;"></div>
<div style="position:absolute;left:928.43px;top:1315.8px;width:32.89px;height:30.7px;background:#1a1c22;"></div>
<div style="position:absolute;left:960.71px;top:1315.8px;width:32.89px;height:30.7px;background:#1a1c22;"></div>
<div style="position:absolute;left:767.0px;top:1346.5px;width:32.89px;height:30.7px;background:#3b3e47;"></div>
<div style="position:absolute;left:799.29px;top:1346.5px;width:32.89px;height:30.7px;background:#363942;"></div>
<div style="position:absolute;left:831.57px;top:1346.5px;width:32.89px;height:30.7px;background:#373a43;"></div>
<div style="position:absolute;left:863.86px;top:1346.5px;width:32.89px;height:30.7px;background:#363942;"></div>
<div style="position:absolute;left:896.14px;top:1346.5px;width:32.89px;height:30.7px;background:#383b44;"></div>
<div style="position:absolute;left:928.43px;top:1346.5px;width:32.89px;height:30.7px;background:#3e414a;"></div>
<div style="position:absolute;left:960.71px;top:1346.5px;width:32.89px;height:30.7px;background:#373a43;"></div>
<div style="position:absolute;left:767.0px;top:1377.2px;width:32.89px;height:30.7px;background:#1b1d23;"></div>
<div style="position:absolute;left:799.29px;top:1377.2px;width:32.89px;height:30.7px;background:#1c1e24;"></div>
<div style="position:absolute;left:831.57px;top:1377.2px;width:32.89px;height:30.7px;background:#1a1c22;"></div>
<div style="position:absolute;left:863.86px;top:1377.2px;width:32.89px;height:30.7px;background:#1a1c22;"></div>
<div style="position:absolute;left:896.14px;top:1377.2px;width:32.89px;height:30.7px;background:#1a1c22;"></div>
<div style="position:absolute;left:928.43px;top:1377.2px;width:32.89px;height:30.7px;background:#1c1e24;"></div>
<div style="position:absolute;left:960.71px;top:1377.2px;width:32.89px;height:30.7px;background:#1b1d23;"></div>
<div style="position:absolute;left:767.0px;top:1407.9px;width:32.89px;height:30.7px;background:#2f3138;"></div>
<div style="position:absolute;left:799.29px;top:1407.9px;width:32.89px;height:30.7px;background:#31333a;"></div>
<div style="position:absolute;left:831.57px;top:1407.9px;width:32.89px;height:30.7px;background:#32343b;"></div>
<div style="position:absolute;left:863.86px;top:1407.9px;width:32.89px;height:30.7px;background:#32343b;"></div>
<div style="position:absolute;left:896.14px;top:1407.9px;width:32.89px;height:30.7px;background:#34363d;"></div>
<div style="position:absolute;left:928.43px;top:1407.9px;width:32.89px;height:30.7px;background:#2e3037;"></div>
<div style="position:absolute;left:960.71px;top:1407.9px;width:32.89px;height:30.7px;background:#2e3037;"></div>
<div style="position:absolute;left:767.0px;top:1438.6px;width:32.89px;height:30.7px;background:#26282e;"></div>
<div style="position:absolute;left:799.29px;top:1438.6px;width:32.89px;height:30.7px;background:#26282e;"></div>
<div style="position:absolute;left:831.57px;top:1438.6px;width:32.89px;height:30.7px;background:#26282e;"></div>
<div style="position:absolute;left:863.86px;top:1438.6px;width:32.89px;height:30.7px;background:#26282e;"></div>
<div style="position:absolute;left:896.14px;top:1438.6px;width:32.89px;height:30.7px;background:#23252b;"></div>
<div style="position:absolute;left:928.43px;top:1438.6px;width:32.89px;height:30.7px;background:#202228;"></div>
<div style="position:absolute;left:960.71px;top:1438.6px;width:32.89px;height:30.7px;background:#212329;"></div>
<div style="position:absolute;left:767.0px;top:1469.3px;width:32.89px;height:30.7px;background:#1a1c22;"></div>
<div style="position:absolute;left:799.29px;top:1469.3px;width:32.89px;height:30.7px;background:#1c1e24;"></div>
<div style="position:absolute;left:831.57px;top:1469.3px;width:32.89px;height:30.7px;background:#1b1d23;"></div>
<div style="position:absolute;left:863.86px;top:1469.3px;width:32.89px;height:30.7px;background:#1c1e24;"></div>
<div style="position:absolute;left:896.14px;top:1469.3px;width:32.89px;height:30.7px;background:#1b1d23;"></div>
<div style="position:absolute;left:928.43px;top:1469.3px;width:32.89px;height:30.7px;background:#1b1d23;"></div>
<div style="position:absolute;left:960.71px;top:1469.3px;width:32.89px;height:30.7px;background:#1c1e24;"></div>
<div style="position:absolute;left:767.0px;top:1500.0px;width:32.89px;height:30.7px;background:#383b44;"></div>
<div style="position:absolute;left:799.29px;top:1500.0px;width:32.89px;height:30.7px;background:#3e414a;"></div>
<div style="position:absolute;left:831.57px;top:1500.0px;width:32.89px;height:30.7px;background:#363942;"></div>
<div style="position:absolute;left:863.86px;top:1500.0px;width:32.89px;height:30.7px;background:#393c45;"></div>
<div style="position:absolute;left:896.14px;top:1500.0px;width:32.89px;height:30.7px;background:#3e414a;"></div>
<div style="position:absolute;left:928.43px;top:1500.0px;width:32.89px;height:30.7px;background:#3b3e47;"></div>
<div style="position:absolute;left:960.71px;top:1500.0px;width:32.89px;height:30.7px;background:#383b44;"></div>
<div style="position:absolute;left:1078.0px;top:599.0px;width:30.73px;height:30.23px;background:#35373e;"></div>
<div style="position:absolute;left:1108.12px;top:599.0px;width:30.73px;height:30.23px;background:#2d2f36;"></div>
<div style="position:absolute;left:1138.25px;top:599.0px;width:30.73px;height:30.23px;background:#35373e;"></div>
<div style="position:absolute;left:1168.38px;top:599.0px;width:30.73px;height:30.23px;background:#31333a;"></div>
<div style="position:absolute;left:1198.5px;top:599.0px;width:30.73px;height:30.23px;background:#2e3037;"></div>
<div style="position:absolute;left:1228.62px;top:599.0px;width:30.73px;height:30.23px;background:#31333a;"></div>
<div style="position:absolute;left:1258.75px;top:599.0px;width:30.73px;height:30.23px;background:#35373e;"></div>
<div style="position:absolute;left:1288.88px;top:599.0px;width:30.73px;height:30.23px;background:#32343b;"></div>
<div style="position:absolute;left:1078.0px;top:629.23px;width:30.73px;height:30.23px;background:#212329;"></div>
<div style="position:absolute;left:1108.12px;top:629.23px;width:30.73px;height:30.23px;background:#24262c;"></div>
<div style="position:absolute;left:1138.25px;top:629.23px;width:30.73px;height:30.23px;background:#22242a;"></div>
<div style="position:absolute;left:1168.38px;top:629.23px;width:30.73px;height:30.23px;background:#27292f;"></div>
<div style="position:absolute;left:1198.5px;top:629.23px;width:30.73px;height:30.23px;background:#27292f;"></div>
<div style="position:absolute;left:1228.62px;top:629.23px;width:30.73px;height:30.23px;background:#27292f;"></div>
<div style="position:absolute;left:1258.75px;top:629.23px;width:30.73px;height:30.23px;background:#24262c;"></div>
<div style="position:absolute;left:1288.88px;top:629.23px;width:30.73px;height:30.23px;background:#22242a;"></div>
<div style="position:absolute;left:1078.0px;top:659.46px;width:30.73px;height:30.23px;background:#1c1e24;"></div>
<div style="position:absolute;left:1108.12px;top:659.46px;width:30.73px;height:30.23px;background:#1a1c22;"></div>
<div style="position:absolute;left:1138.25px;top:659.46px;width:30.73px;height:30.23px;background:#1a1c22;"></div>
<div style="position:absolute;left:1168.38px;top:659.46px;width:30.73px;height:30.23px;background:#1b1d23;"></div>
<div style="position:absolute;left:1198.5px;top:659.46px;width:30.73px;height:30.23px;background:#1c1e24;"></div>
<div style="position:absolute;left:1228.62px;top:659.46px;width:30.73px;height:30.23px;background:#1a1c22;"></div>
<div style="position:absolute;left:1258.75px;top:659.46px;width:30.73px;height:30.23px;background:#1a1c22;"></div>
<div style="position:absolute;left:1288.88px;top:659.46px;width:30.73px;height:30.23px;background:#1c1e24;"></div>
<div style="position:absolute;left:1078.0px;top:689.69px;width:30.73px;height:30.23px;background:#3d4049;"></div>
<div style="position:absolute;left:1108.12px;top:689.69px;width:30.73px;height:30.23px;background:#3b3e47;"></div>
<div style="position:absolute;left:1138.25px;top:689.69px;width:30.73px;height:30.23px;background:#363942;"></div>
<div style="position:absolute;left:1168.38px;top:689.69px;width:30.73px;height:30.23px;background:#363942;"></div>
<div style="position:absolute;left:1198.5px;top:689.69px;width:30.73px;height:30.23px;background:#3a3d46;"></div>
<div style="position:absolute;left:1228.62px;top:689.69px;width:30.73px;height:30.23px;background:#3d4049;"></div>
<div style="position:absolute;left:1258.75px;top:689.69px;width:30.73px;height:30.23px;background:#3a3d46;"></div>
<div style="position:absolute;left:1288.88px;top:689.69px;width:30.73px;height:30.23px;background:#393c45;"></div>
<div style="position:absolute;left:1078.0px;top:719.92px;width:30.73px;height:30.23px;background:#1c1e24;"></div>
<div style="position:absolute;left:1108.12px;top:719.92px;width:30.73px;height:30.23px;background:#1c1e24;"></div>
<div style="position:absolute;left:1138.25px;top:719.92px;width:30.73px;height:30.23px;background:#1b1d23;"></div>
<div style="position:absolute;left:1168.38px;top:719.92px;width:30.73px;height:30.23px;background:#1b1d23;"></div>
<div style="position:absolute;left:1198.5px;top:719.92px;width:30.73px;height:30.23px;background:#1c1e24;"></div>
<div style="position:absolute;left:1228.62px;top:719.92px;width:30.73px;height:30.23px;background:#1b1d23;"></div>
<div style="position:absolute;left:1258.75px;top:719.92px;width:30.73px;height:30.23px;background:#1b1d23;"></div>
<div style="position:absolute;left:1288.88px;top:719.92px;width:30.73px;height:30.23px;background:#1a1c22;"></div>
<div style="position:absolute;left:1078.0px;top:750.15px;width:30.73px;height:30.23px;background:#22242a;"></div>
<div style="position:absolute;left:1108.12px;top:750.15px;width:30.73px;height:30.23px;background:#202228;"></div>
<div style="position:absolute;left:1138.25px;top:750.15px;width:30.73px;height:30.23px;background:#22242a;"></div>
<div style="position:absolute;left:1168.38px;top:750.15px;width:30.73px;height:30.23px;background:#26282e;"></div>
<div style="position:absolute;left:1198.5px;top:750.15px;width:30.73px;height:30.23px;background:#22242a;"></div>
<div style="position:absolute;left:1228.62px;top:750.15px;width:30.73px;height:30.23px;background:#24262c;"></div>
<div style="position:absolute;left:1258.75px;top:750.15px;width:30.73px;height:30.23px;background:#22242a;"></div>
<div style="position:absolute;left:1288.88px;top:750.15px;width:30.73px;height:30.23px;background:#26282e;"></div>
<div style="position:absolute;left:1078.0px;top:780.38px;width:30.73px;height:30.23px;background:#2d2f36;"></div>
<div style="position:absolute;left:1108.12px;top:780.38px;width:30.73px;height:30.23px;background:#34363d;"></div>
<div style="position:absolute;left:1138.25px;top:780.38px;width:30.73px;height:30.23px;background:#32343b;"></div>
<div style="position:absolute;left:1168.38px;top:780.38px;width:30.73px;height:30.23px;background:#2e3037;"></div>
<div style="position:absolute;left:1198.5px;top:780.38px;width:30.73px;height:30.23px;background:#2e3037;"></div>
<div style="position:absolute;left:1228.62px;top:780.38px;width:30.73px;height:30.23px;background:#33353c;"></div>
<div style="position:absolute;left:1258.75px;top:780.38px;width:30.73px;height:30.23px;background:#303239;"></div>
<div style="position:absolute;left:1288.88px;top:780.38px;width:30.73px;height:30.23px;background:#34363d;"></div>
<div style="position:absolute;left:1078.0px;top:810.61px;width:30.73px;height:30.23px;background:#1a1c22;"></div>
<div style="position:absolute;left:1108.12px;top:810.61px;width:30.73px;height:30.23px;background:#1b1d23;"></div>
<div style="position:absolute;left:1138.25px;top:810.61px;width:30.73px;height:30.23px;background:#1c1e24;"></div>
<div style="position:absolute;left:1168.38px;top:810.61px;width:30.73px;height:30.23px;background:#1b1d23;"></div>
<div style="position:absolute;left:1198.5px;top:810.61px;width:30.73px;height:30.23px;background:#1a1c22;"></div>
<div style="position:absolute;left:1228.62px;top:810.61px;width:30.73px;height:30.23px;background:#1c1e24;"></div>
<div style="position:absolute;left:1258.75px;top:810.61px;width:30.73px;height:30.23px;background:#1b1d23;"></div>
<div style="position:absolute;left:1288.88px;top:810.61px;width:30.73px;height:30.23px;background:#1b1d23;"></div>
<div style="position:absolute;left:1078.0px;top:840.84px;width:30.73px;height:30.23px;background:#33353c;"></div>
<div style="position:absolute;left:1108.12px;top:840.84px;width:30.73px;height:30.23px;background:#2e3037;"></div>
<div style="position:absolute;left:1138.25px;top:840.84px;width:30.73px;height:30.23px;background:#2f3138;"></div>
<div style="position:absolute;left:1168.38px;top:840.84px;width:30.73px;height:30.23px;background:#2f3138;"></div>
<div style="position:absolute;left:1198.5px;top:840.84px;width:30.73px;height:30.23px;background:#2f3138;"></div>
<div style="position:absolute;left:1228.62px;top:840.84px;width:30.73px;height:30.23px;background:#2d2f36;"></div>
<div style="position:absolute;left:1258.75px;top:840.84px;width:30.73px;height:30.23px;background:#2f3138;"></div>
<div style="position:absolute;left:1288.88px;top:840.84px;width:30.73px;height:30.23px;background:#34363d;"></div>
<div style="position:absolute;left:1078.0px;top:871.07px;width:30.73px;height:30.23px;background:#212329;"></div>
<div style="position:absolute;left:1108.12px;top:871.07px;width:30.73px;height:30.23px;background:#26282e;"></div>
<div style="position:absolute;left:1138.25px;top:871.07px;width:30.73px;height:30.23px;background:#24262c;"></div>
<div style="position:absolute;left:1168.38px;top:871.07px;width:30.73px;height:30.23px;background:#212329;"></div>
<div style="position:absolute;left:1198.5px;top:871.07px;width:30.73px;height:30.23px;background:#27292f;"></div>
<div style="position:absolute;left:1228.62px;top:871.07px;width:30.73px;height:30.23px;background:#27292f;"></div>
<div style="position:absolute;left:1258.75px;top:871.07px;width:30.73px;height:30.23px;background:#212329;"></div>
<div style="position:absolute;left:1288.88px;top:871.07px;width:30.73px;height:30.23px;background:#1f2127;"></div>
<div style="position:absolute;left:1078.0px;top:901.3px;width:30.73px;height:30.23px;background:#1a1c22;"></div>
<div style="position:absolute;left:1108.12px;top:901.3px;width:30.73px;height:30.23px;background:#1c1e24;"></div>
<div style="position:absolute;left:1138.25px;top:901.3px;width:30.73px;height:30.23px;background:#1c1e24;"></div>
<div style="position:absolute;left:1168.38px;top:901.3px;width:30.73px;height:30.23px;background:#1a1c22;"></div>
<div style="position:absolute;left:1198.5px;top:901.3px;width:30.73px;height:30.23px;background:#1c1e24;"></div>
<div style="position:absolute;left:1228.62px;top:901.3px;width:30.73px;height:30.23px;background:#1c1e24;"></div>
<div style="position:absolute;left:1258.75px;top:901.3px;width:30.73px;height:30.23px;background:#1a1c22;"></div>
<div style="position:absolute;left:1288.88px;top:901.3px;width:30.73px;height:30.23px;background:#1b1d23;"></div>
<div style="position:absolute;left:1078.0px;top:931.53px;width:30.73px;height:30.23px;background:#393c45;"></div>
<div style="position:absolute;left:1108.12px;top:931.53px;width:30.73px;height:30.23px;background:#393c45;"></div>
<div style="position:absolute;left:1138.25px;top:931.53px;width:30.73px;height:30.23px;background:#363942;"></div>
<div style="position:absolute;left:1168.38px;top:931.53px;width:30.73px;height:30.23px;background:#3a3d46;"></div>
<div style="position:absolute;left:1198.5px;top:931.53px;width:30.73px;height:30.23px;background:#393c45;"></div>
<div style="position:absolute;left:1228.62px;top:931.53px;width:30.73px;height:30.23px;background:#3a3d46;"></div>
<div style="position:absolute;left:1258.75px;top:931.53px;width:30.73px;height:30.23px;background:#3e414a;"></div>
<div style="position:absolute;left:1288.88px;top:931.53px;width:30.73px;height:30.23px;background:#393c45;"></div>
<div style="position:absolute;left:1078.0px;top:961.76px;width:30.73px;height:30.23px;background:#1c1e24;"></div>
<div style="position:absolute;left:1108.12px;top:961.76px;width:30.73px;height:30.23px;background:#1b1d23;"></div>
<div style="position:absolute;left:1138.25px;top:961.76px;width:30.73px;height:30.23px;background:#1b1d23;"></div>
<div style="position:absolute;left:1168.38px;top:961.76px;width:30.73px;height:30.23px;background:#1c1e24;"></div>
<div style="position:absolute;left:1198.5px;top:961.76px;width:30.73px;height:30.23px;background:#1b1d23;"></div>
<div style="position:absolute;left:1228.62px;top:961.76px;width:30.73px;height:30.23px;background:#1a1c22;"></div>
<div style="position:absolute;left:1258.75px;top:961.76px;width:30.73px;height:30.23px;background:#1a1c22;"></div>
<div style="position:absolute;left:1288.88px;top:961.76px;width:30.73px;height:30.23px;background:#1c1e24;"></div>
<div style="position:absolute;left:1078.0px;top:991.99px;width:30.73px;height:30.23px;background:#24262c;"></div>
<div style="position:absolute;left:1108.12px;top:991.99px;width:30.73px;height:30.23px;background:#26282e;"></div>
<div style="position:absolute;left:1138.25px;top:991.99px;width:30.73px;height:30.23px;background:#27292f;"></div>
<div style="position:absolute;left:1168.38px;top:991.99px;width:30.73px;height:30.23px;background:#25272d;"></div>
<div style="position:absolute;left:1198.5px;top:991.99px;width:30.73px;height:30.23px;background:#27292f;"></div>
<div style="position:absolute;left:1228.62px;top:991.99px;width:30.73px;height:30.23px;background:#212329;"></div>
<div style="position:absolute;left:1258.75px;top:991.99px;width:30.73px;height:30.23px;background:#27292f;"></div>
<div style="position:absolute;left:1288.88px;top:991.99px;width:30.73px;height:30.23px;background:#212329;"></div>
<div style="position:absolute;left:1078.0px;top:1022.22px;width:30.73px;height:30.23px;background:#35373e;"></div>
<div style="position:absolute;left:1108.12px;top:1022.22px;width:30.73px;height:30.23px;background:#35373e;"></div>
<div style="position:absolute;left:1138.25px;top:1022.22px;width:30.73px;height:30.23px;background:#2d2f36;"></div>
<div style="position:absolute;left:1168.38px;top:1022.22px;width:30.73px;height:30.23px;background:#34363d;"></div>
<div style="position:absolute;left:1198.5px;top:1022.22px;width:30.73px;height:30.23px;background:#2f3138;"></div>
<div style="position:absolute;left:1228.62px;top:1022.22px;width:30.73px;height:30.23px;background:#2d2f36;"></div>
<div style="position:absolute;left:1258.75px;top:1022.22px;width:30.73px;height:30.23px;background:#2f3138;"></div>
<div style="position:absolute;left:1288.88px;top:1022.22px;width:30.73px;height:30.23px;background:#2f3138;"></div>
<div style="position:absolute;left:1078.0px;top:1052.45px;width:30.73px;height:30.23px;background:#1a1c22;"></div>
<div style="position:absolute;left:1108.12px;top:1052.45px;width:30.73px;height:30.23px;background:#1b1d23;"></div>
<div style="position:absolute;left:1138.25px;top:1052.45px;width:30.73px;height:30.23px;background:#1c1e24;"></div>
<div style="position:absolute;left:1168.38px;top:1052.45px;width:30.73px;height:30.23px;background:#1c1e24;"></div>
<div style="position:absolute;left:1198.5px;top:1052.45px;width:30.73px;height:30.23px;background:#1a1c22;"></div>
<div style="position:absolute;left:1228.62px;top:1052.45px;width:30.73px;height:30.23px;background:#1c1e24;"></div>
<div style="position:absolute;left:1258.75px;top:1052.45px;width:30.73px;height:30.23px;background:#1a1c22;"></div>
<div style="position:absolute;left:1288.88px;top:1052.45px;width:30.73px;height:30.23px;background:#1b1d23;"></div>
<div style="position:absolute;left:1078.0px;top:1082.68px;width:30.73px;height:30.23px;background:#35373e;"></div>
<div style="position:absolute;left:1108.12px;top:1082.68px;width:30.73px;height:30.23px;background:#35373e;"></div>
<div style="position:absolute;left:1138.25px;top:1082.68px;width:30.73px;height:30.23px;background:#35373e;"></div>
<div style="position:absolute;left:1168.38px;top:1082.68px;width:30.73px;height:30.23px;background:#34363d;"></div>
<div style="position:absolute;left:1198.5px;top:1082.68px;width:30.73px;height:30.23px;background:#2e3037;"></div>
<div style="position:absolute;left:1228.62px;top:1082.68px;width:30.73px;height:30.23px;background:#35373e;"></div>
<div style="position:absolute;left:1258.75px;top:1082.68px;width:30.73px;height:30.23px;background:#2d2f36;"></div>
<div style="position:absolute;left:1288.88px;top:1082.68px;width:30.73px;height:30.23px;background:#303239;"></div>
<div style="position:absolute;left:1078.0px;top:1112.91px;width:30.73px;height:30.23px;background:#22242a;"></div>
<div style="position:absolute;left:1108.12px;top:1112.91px;width:30.73px;height:30.23px;background:#23252b;"></div>
<div style="position:absolute;left:1138.25px;top:1112.91px;width:30.73px;height:30.23px;background:#1f2127;"></div>
<div style="position:absolute;left:1168.38px;top:1112.91px;width:30.73px;height:30.23px;background:#202228;"></div>
<div style="position:absolute;left:1198.5px;top:1112.91px;width:30.73px;height:30.23px;background:#27292f;"></div>
<div style="position:absolute;left:1228.62px;top:1112.91px;width:30.73px;height:30.23px;background:#26282e;"></div>
<div style="position:absolute;left:1258.75px;top:1112.91px;width:30.73px;height:30.23px;background:#27292f;"></div>
<div style="position:absolute;left:1288.88px;top:1112.91px;width:30.73px;height:30.23px;background:#1f2127;"></div>
<div style="position:absolute;left:1078.0px;top:1143.14px;width:30.73px;height:30.23px;background:#1a1c22;"></div>
<div style="position:absolute;left:1108.12px;top:1143.14px;width:30.73px;height:30.23px;background:#1b1d23;"></div>
<div style="position:absolute;left:1138.25px;top:1143.14px;width:30.73px;height:30.23px;background:#1b1d23;"></div>
<div style="position:absolute;left:1168.38px;top:1143.14px;width:30.73px;height:30.23px;background:#1c1e24;"></div>
<div style="position:absolute;left:1198.5px;top:1143.14px;width:30.73px;height:30.23px;background:#1c1e24;"></div>
<div style="position:absolute;left:1228.62px;top:1143.14px;width:30.73px;height:30.23px;background:#1c1e24;"></div>
<div style="position:absolute;left:1258.75px;top:1143.14px;width:30.73px;height:30.23px;background:#1c1e24;"></div>
<div style="position:absolute;left:1288.88px;top:1143.14px;width:30.73px;height:30.23px;background:#1a1c22;"></div>
<div style="position:absolute;left:1078.0px;top:1173.37px;width:30.73px;height:30.23px;background:#3a3d46;"></div>
<div style="position:absolute;left:1108.12px;top:1173.37px;width:30.73px;height:30.23px;background:#3d4049;"></div>
<div style="position:absolute;left:1138.25px;top:1173.37px;width:30.73px;height:30.23px;background:#3e414a;"></div>
<div style="position:absolute;left:1168.38px;top:1173.37px;width:30.73px;height:30.23px;background:#3e414a;"></div>
<div style="position:absolute;left:1198.5px;top:1173.37px;width:30.73px;height:30.23px;background:#3d4049;"></div>
<div style="position:absolute;left:1228.62px;top:1173.37px;width:30.73px;height:30.23px;background:#3e414a;"></div>
<div style="position:absolute;left:1258.75px;top:1173.37px;width:30.73px;height:30.23px;background:#393c45;"></div>
<div style="position:absolute;left:1288.88px;top:1173.37px;width:30.73px;height:30.23px;background:#3e414a;"></div>
<div style="position:absolute;left:1078.0px;top:1203.6px;width:30.73px;height:30.23px;background:#1b1d23;"></div>
<div style="position:absolute;left:1108.12px;top:1203.6px;width:30.73px;height:30.23px;background:#1c1e24;"></div>
<div style="position:absolute;left:1138.25px;top:1203.6px;width:30.73px;height:30.23px;background:#1a1c22;"></div>
<div style="position:absolute;left:1168.38px;top:1203.6px;width:30.73px;height:30.23px;background:#1b1d23;"></div>
<div style="position:absolute;left:1198.5px;top:1203.6px;width:30.73px;height:30.23px;background:#1a1c22;"></div>
<div style="position:absolute;left:1228.62px;top:1203.6px;width:30.73px;height:30.23px;background:#1b1d23;"></div>
<div style="position:absolute;left:1258.75px;top:1203.6px;width:30.73px;height:30.23px;background:#1a1c22;"></div>
<div style="position:absolute;left:1288.88px;top:1203.6px;width:30.73px;height:30.23px;background:#1b1d23;"></div>
<div style="position:absolute;left:1078.0px;top:1233.83px;width:30.73px;height:30.23px;background:#26282e;"></div>
<div style="position:absolute;left:1108.12px;top:1233.83px;width:30.73px;height:30.23px;background:#24262c;"></div>
<div style="position:absolute;left:1138.25px;top:1233.83px;width:30.73px;height:30.23px;background:#202228;"></div>
<div style="position:absolute;left:1168.38px;top:1233.83px;width:30.73px;height:30.23px;background:#22242a;"></div>
<div style="position:absolute;left:1198.5px;top:1233.83px;width:30.73px;height:30.23px;background:#25272d;"></div>
<div style="position:absolute;left:1228.62px;top:1233.83px;width:30.73px;height:30.23px;background:#202228;"></div>
<div style="position:absolute;left:1258.75px;top:1233.83px;width:30.73px;height:30.23px;background:#22242a;"></div>
<div style="position:absolute;left:1288.88px;top:1233.83px;width:30.73px;height:30.23px;background:#23252b;"></div>
<div style="position:absolute;left:1078.0px;top:1264.06px;width:30.73px;height:30.23px;background:#2e3037;"></div>
<div style="position:absolute;left:1108.12px;top:1264.06px;width:30.73px;height:30.23px;background:#2f3138;"></div>
<div style="position:absolute;left:1138.25px;top:1264.06px;width:30.73px;height:30.23px;background:#32343b;"></div>
<div style="position:absolute;left:1168.38px;top:1264.06px;width:30.73px;height:30.23px;background:#2f3138;"></div>
<div style="position:absolute;left:1198.5px;top:1264.06px;width:30.73px;height:30.23px;background:#31333a;"></div>
<div style="position:absolute;left:1228.62px;top:1264.06px;width:30.73px;height:30.23px;background:#2f3138;"></div>
<div style="position:absolute;left:1258.75px;top:1264.06px;width:30.73px;height:30.23px;background:#34363d;"></div>
<div style="position:absolute;left:1288.88px;top:1264.06px;width:30.73px;height:30.23px;background:#303239;"></div>
<div style="position:absolute;left:1078.0px;top:1294.29px;width:30.73px;height:30.23px;background:#1c1e24;"></div>
<div style="position:absolute;left:1108.12px;top:1294.29px;width:30.73px;height:30.23px;background:#1a1c22;"></div>
<div style="position:absolute;left:1138.25px;top:1294.29px;width:30.73px;height:30.23px;background:#1b1d23;"></div>
<div style="position:absolute;left:1168.38px;top:1294.29px;width:30.73px;height:30.23px;background:#1b1d23;"></div>
<div style="position:absolute;left:1198.5px;top:1294.29px;width:30.73px;height:30.23px;background:#1a1c22;"></div>
<div style="position:absolute;left:1228.62px;top:1294.29px;width:30.73px;height:30.23px;background:#1c1e24;"></div>
<div style="position:absolute;left:1258.75px;top:1294.29px;width:30.73px;height:30.23px;background:#1a1c22;"></div>
<div style="position:absolute;left:1288.88px;top:1294.29px;width:30.73px;height:30.23px;background:#1a1c22;"></div>
<div style="position:absolute;left:1078.0px;top:1324.52px;width:30.73px;height:30.23px;background:#33353c;"></div>
<div style="position:absolute;left:1108.12px;top:1324.52px;width:30.73px;height:30.23px;background:#35373e;"></div>
<div style="position:absolute;left:1138.25px;top:1324.52px;width:30.73px;height:30.23px;background:#33353c;"></div>
<div style="position:absolute;left:1168.38px;top:1324.52px;width:30.73px;height:30.23px;background:#32343b;"></div>
<div style="position:absolute;left:1198.5px;top:1324.52px;width:30.73px;height:30.23px;background:#33353c;"></div>
<div style="position:absolute;left:1228.62px;top:1324.52px;width:30.73px;height:30.23px;background:#303239;"></div>
<div style="position:absolute;left:1258.75px;top:1324.52px;width:30.73px;height:30.23px;background:#32343b;"></div>
<div style="position:absolute;left:1288.88px;top:1324.52px;width:30.73px;height:30.23px;background:#32343b;"></div>
<div style="position:absolute;left:1078.0px;top:1354.75px;width:30.73px;height:30.23px;background:#202228;"></div>
<div style="position:absolute;left:1108.12px;top:1354.75px;width:30.73px;height:30.23px;background:#24262c;"></div>
<div style="position:absolute;left:1138.25px;top:1354.75px;width:30.73px;height:30.23px;background:#1f2127;"></div>
<div style="position:absolute;left:1168.38px;top:1354.75px;width:30.73px;height:30.23px;background:#24262c;"></div>
<div style="position:absolute;left:1198.5px;top:1354.75px;width:30.73px;height:30.23px;background:#27292f;"></div>
<div style="position:absolute;left:1228.62px;top:1354.75px;width:30.73px;height:30.23px;background:#26282e;"></div>
<div style="position:absolute;left:1258.75px;top:1354.75px;width:30.73px;height:30.23px;background:#26282e;"></div>
<div style="position:absolute;left:1288.88px;top:1354.75px;width:30.73px;height:30.23px;background:#1f2127;"></div>
<div style="position:absolute;left:1078.0px;top:1384.98px;width:30.73px;height:30.23px;background:#1b1d23;"></div>
<div style="position:absolute;left:1108.12px;top:1384.98px;width:30.73px;height:30.23px;background:#1b1d23;"></div>
<div style="position:absolute;left:1138.25px;top:1384.98px;width:30.73px;height:30.23px;background:#1c1e24;"></div>
<div style="position:absolute;left:1168.38px;top:1384.98px;width:30.73px;height:30.23px;background:#1c1e24;"></div>
<div style="position:absolute;left:1198.5px;top:1384.98px;width:30.73px;height:30.23px;background:#1b1d23;"></div>
<div style="position:absolute;left:1228.62px;top:1384.98px;width:30.73px;height:30.23px;background:#1c1e24;"></div>
<div style="position:absolute;left:1258.75px;top:1384.98px;width:30.73px;height:30.23px;background:#1a1c22;"></div>
<div style="position:absolute;left:1288.88px;top:1384.98px;width:30.73px;height:30.23px;background:#1a1c22;"></div>
<div style="position:absolute;left:1078.0px;top:1415.21px;width:30.73px;height:30.23px;background:#393c45;"></div>
<div style="position:absolute;left:1108.12px;top:1415.21px;width:30.73px;height:30.23px;background:#373a43;"></div>
<div style="position:absolute;left:1138.25px;top:1415.21px;width:30.73px;height:30.23px;background:#373a43;"></div>
<div style="position:absolute;left:1168.38px;top:1415.21px;width:30.73px;height:30.23px;background:#3a3d46;"></div>
<div style="position:absolute;left:1198.5px;top:1415.21px;width:30.73px;height:30.23px;background:#3a3d46;"></div>
<div style="position:absolute;left:1228.62px;top:1415.21px;width:30.73px;height:30.23px;background:#363942;"></div>
<div style="position:absolute;left:1258.75px;top:1415.21px;width:30.73px;height:30.23px;background:#383b44;"></div>
<div style="position:absolute;left:1288.88px;top:1415.21px;width:30.73px;height:30.23px;background:#3a3d46;"></div>
<div style="position:absolute;left:1078.0px;top:1445.44px;width:30.73px;height:30.23px;background:#1a1c22;"></div>
<div style="position:absolute;left:1108.12px;top:1445.44px;width:30.73px;height:30.23px;background:#1b1d23;"></div>
<div style="position:absolute;left:1138.25px;top:1445.44px;width:30.73px;height:30.23px;background:#1c1e24;"></div>
<div style="position:absolute;left:1168.38px;top:1445.44px;width:30.73px;height:30.23px;background:#1b1d23;"></div>
<div style="position:absolute;left:1198.5px;top:1445.44px;width:30.73px;height:30.23px;background:#1b1d23;"></div>
<div style="position:absolute;left:1228.62px;top:1445.44px;width:30.73px;height:30.23px;background:#1a1c22;"></div>
<div style="position:absolute;left:1258.75px;top:1445.44px;width:30.73px;height:30.23px;background:#1c1e24;"></div>
<div style="position:absolute;left:1288.88px;top:1445.44px;width:30.73px;height:30.23px;background:#1c1e24;"></div>
<div style="position:absolute;left:1078.0px;top:1475.67px;width:30.73px;height:30.23px;background:#26282e;"></div>
<div style="position:absolute;left:1108.12px;top:1475.67px;width:30.73px;height:30.23px;background:#24262c;"></div>
<div style="position:absolute;left:1138.25px;top:1475.67px;width:30.73px;height:30.23px;background:#202228;"></div>
<div style="position:absolute;left:1168.38px;top:1475.67px;width:30.73px;height:30.23px;background:#23252b;"></div>
<div style="position:absolute;left:1198.5px;top:1475.67px;width:30.73px;height:30.23px;background:#1f2127;"></div>
<div style="position:absolute;left:1228.62px;top:1475.67px;width:30.73px;height:30.23px;background:#212329;"></div>
<div style="position:absolute;left:1258.75px;top:1475.67px;width:30.73px;height:30.23px;background:#25272d;"></div>
<div style="position:absolute;left:1288.88px;top:1475.67px;width:30.73px;height:30.23px;background:#202228;"></div>
<div style="position:absolute;left:1078.0px;top:1505.9px;width:30.73px;height:30.23px;background:#31333a;"></div>
<div style="position:absolute;left:1108.12px;top:1505.9px;width:30.73px;height:30.23px;background:#2d2f36;"></div>
<div style="position:absolute;left:1138.25px;top:1505.9px;width:30.73px;height:30.23px;background:#2e3037;"></div>
<div style="position:absolute;left:1168.38px;top:1505.9px;width:30.73px;height:30.23px;background:#31333a;"></div>
<div style="position:absolute;left:1198.5px;top:1505.9px;width:30.73px;height:30.23px;background:#2e3037;"></div>
<div style="position:absolute;left:1228.62px;top:1505.9px;width:30.73px;height:30.23px;background:#303239;"></div>
<div style="position:absolute;left:1258.75px;top:1505.9px;width:30.73px;height:30.23px;background:#2e3037;"></div>
<div style="position:absolute;left:1288.88px;top:1505.9px;width:30.73px;height:30.23px;background:#31333a;"></div>
<div style="position:absolute;left:1751.0px;top:599px;width:32.1px;height:45px;background:#2e3037;"></div>
<div style="position:absolute;left:1782.5px;top:599px;width:32.1px;height:45px;background:#34363d;"></div>
<div style="position:absolute;left:1814.0px;top:599px;width:32.1px;height:45px;background:#2d2f36;"></div>
<div style="position:absolute;left:1845.5px;top:599px;width:32.1px;height:45px;background:#32343b;"></div>
<div style="position:absolute;left:1877.0px;top:599px;width:32.1px;height:45px;background:#35373e;"></div>
<div style="position:absolute;left:1908.5px;top:599px;width:32.1px;height:45px;background:#33353c;"></div>
<div style="position:absolute;left:1940.0px;top:599px;width:32.1px;height:45px;background:#31333a;"></div>
<div style="position:absolute;left:1971.5px;top:599px;width:32.1px;height:45px;background:#2f3138;"></div>
<div style="position:absolute;left:2003.0px;top:599px;width:32.1px;height:45px;background:#2d2f36;"></div>
<div style="position:absolute;left:2034.5px;top:599px;width:32.1px;height:45px;background:#23252b;"></div>
<div style="position:absolute;left:811.0px;top:1802px;width:34.46px;height:39px;background:#303239;"></div>
<div style="position:absolute;left:844.86px;top:1802px;width:34.46px;height:39px;background:#2e3037;"></div>
<div style="position:absolute;left:878.71px;top:1802px;width:34.46px;height:39px;background:#2f3138;"></div>
<div style="position:absolute;left:912.57px;top:1802px;width:34.46px;height:39px;background:#31333a;"></div>
<div style="position:absolute;left:946.43px;top:1802px;width:34.46px;height:39px;background:#2d2f36;"></div>
<div style="position:absolute;left:980.29px;top:1802px;width:34.46px;height:39px;background:#2f3138;"></div>
<div style="position:absolute;left:1014.14px;top:1802px;width:34.46px;height:39px;background:#1e2026;"></div>
<div style="position:absolute;left:811.0px;top:1841px;width:34.46px;height:39px;background:#1b1d23;"></div>
<div style="position:absolute;left:844.86px;top:1841px;width:34.46px;height:39px;background:#1c1e24;"></div>
<div style="position:absolute;left:878.71px;top:1841px;width:34.46px;height:39px;background:#1b1d23;"></div>
<div style="position:absolute;left:912.57px;top:1841px;width:34.46px;height:39px;background:#1c1e24;"></div>
<div style="position:absolute;left:946.43px;top:1841px;width:34.46px;height:39px;background:#1a1c22;"></div>
<div style="position:absolute;left:980.29px;top:1841px;width:34.46px;height:39px;background:#1b1d23;"></div>
<div style="position:absolute;left:1014.14px;top:1841px;width:34.46px;height:39px;background:#1b1d23;"></div>
<div style="position:absolute;left:811.0px;top:1880px;width:34.46px;height:39px;background:#35373e;"></div>
<div style="position:absolute;left:844.86px;top:1880px;width:34.46px;height:39px;background:#2f3138;"></div>
<div style="position:absolute;left:878.71px;top:1880px;width:34.46px;height:39px;background:#31333a;"></div>
<div style="position:absolute;left:912.57px;top:1880px;width:34.46px;height:39px;background:#32343b;"></div>
<div style="position:absolute;left:946.43px;top:1880px;width:34.46px;height:39px;background:#2d2f36;"></div>
<div style="position:absolute;left:980.29px;top:1880px;width:34.46px;height:39px;background:#31333a;"></div>
<div style="position:absolute;left:1014.14px;top:1880px;width:34.46px;height:39px;background:#1b1d23;"></div>
<div style="position:absolute;left:1078.0px;top:1796px;width:30.74px;height:30.7px;background:#2d2f36;"></div>
<div style="position:absolute;left:1108.14px;top:1796px;width:30.74px;height:30.7px;background:#2d2f36;"></div>
<div style="position:absolute;left:1138.29px;top:1796px;width:30.74px;height:30.7px;background:#35373e;"></div>
<div style="position:absolute;left:1168.43px;top:1796px;width:30.74px;height:30.7px;background:#35373e;"></div>
<div style="position:absolute;left:1198.57px;top:1796px;width:30.74px;height:30.7px;background:#303239;"></div>
<div style="position:absolute;left:1228.71px;top:1796px;width:30.74px;height:30.7px;background:#35373e;"></div>
<div style="position:absolute;left:1258.86px;top:1796px;width:30.74px;height:30.7px;background:#22242a;"></div>
<div style="position:absolute;left:1078.0px;top:1826.7px;width:30.74px;height:31.9px;background:#22242a;"></div>
<div style="position:absolute;left:1108.14px;top:1826.7px;width:30.74px;height:31.9px;background:#26282e;"></div>
<div style="position:absolute;left:1138.29px;top:1826.7px;width:30.74px;height:31.9px;background:#202228;"></div>
<div style="position:absolute;left:1168.43px;top:1826.7px;width:30.74px;height:31.9px;background:#25272d;"></div>
<div style="position:absolute;left:1198.57px;top:1826.7px;width:30.74px;height:31.9px;background:#26282e;"></div>
<div style="position:absolute;left:1228.71px;top:1826.7px;width:30.74px;height:31.9px;background:#27292f;"></div>
<div style="position:absolute;left:1258.86px;top:1826.7px;width:30.74px;height:31.9px;background:#212329;"></div>
<div style="position:absolute;left:1078.0px;top:1858.6px;width:30.74px;height:30.7px;background:#1c1e24;"></div>
<div style="position:absolute;left:1108.14px;top:1858.6px;width:30.74px;height:30.7px;background:#1b1d23;"></div>
<div style="position:absolute;left:1138.29px;top:1858.6px;width:30.74px;height:30.7px;background:#1c1e24;"></div>
<div style="position:absolute;left:1168.43px;top:1858.6px;width:30.74px;height:30.7px;background:#1a1c22;"></div>
<div style="position:absolute;left:1198.57px;top:1858.6px;width:30.74px;height:30.7px;background:#1a1c22;"></div>
<div style="position:absolute;left:1228.71px;top:1858.6px;width:30.74px;height:30.7px;background:#1b1d23;"></div>
<div style="position:absolute;left:1258.86px;top:1858.6px;width:30.74px;height:30.7px;background:#1a1c22;"></div>
<div style="position:absolute;left:1078.0px;top:1889.3px;width:30.74px;height:30.0px;background:#383b44;"></div>
<div style="position:absolute;left:1108.14px;top:1889.3px;width:30.74px;height:30.0px;background:#3c3f48;"></div>
<div style="position:absolute;left:1138.29px;top:1889.3px;width:30.74px;height:30.0px;background:#3b3e47;"></div>
<div style="position:absolute;left:1168.43px;top:1889.3px;width:30.74px;height:30.0px;background:#363942;"></div>
<div style="position:absolute;left:1198.57px;top:1889.3px;width:30.74px;height:30.0px;background:#383b44;"></div>
<div style="position:absolute;left:1228.71px;top:1889.3px;width:30.74px;height:30.0px;background:#363942;"></div>
<div style="position:absolute;left:1258.86px;top:1889.3px;width:30.74px;height:30.0px;background:#1c1e24;"></div>
<div style="position:absolute;left:1754.0px;top:1797.6px;width:31.6px;height:31.1px;background:#31333a;"></div>
<div style="position:absolute;left:1785.0px;top:1797.6px;width:31.6px;height:31.1px;background:#33353c;"></div>
<div style="position:absolute;left:1816.0px;top:1797.6px;width:31.6px;height:31.1px;background:#2f3138;"></div>
<div style="position:absolute;left:1847.0px;top:1797.6px;width:31.6px;height:31.1px;background:#2d2f36;"></div>
<div style="position:absolute;left:1878.0px;top:1797.6px;width:31.6px;height:31.1px;background:#2e3037;"></div>
<div style="position:absolute;left:1909.0px;top:1797.6px;width:31.6px;height:31.1px;background:#33353c;"></div>
<div style="position:absolute;left:1940.0px;top:1797.6px;width:31.6px;height:31.1px;background:#35373e;"></div>
<div style="position:absolute;left:1971.0px;top:1797.6px;width:31.6px;height:31.1px;background:#31333a;"></div>
<div style="position:absolute;left:2002.0px;top:1797.6px;width:31.6px;height:31.1px;background:#303239;"></div>
<div style="position:absolute;left:2033.0px;top:1797.6px;width:31.6px;height:31.1px;background:#1f2127;"></div>
<div style="position:absolute;left:1754.0px;top:1828.7px;width:31.6px;height:30.3px;background:#1f2127;"></div>
<div style="position:absolute;left:1785.0px;top:1828.7px;width:31.6px;height:30.3px;background:#26282e;"></div>
<div style="position:absolute;left:1816.0px;top:1828.7px;width:31.6px;height:30.3px;background:#212329;"></div>
<div style="position:absolute;left:1847.0px;top:1828.7px;width:31.6px;height:30.3px;background:#212329;"></div>
<div style="position:absolute;left:1878.0px;top:1828.7px;width:31.6px;height:30.3px;background:#23252b;"></div>
<div style="position:absolute;left:1909.0px;top:1828.7px;width:31.6px;height:30.3px;background:#26282e;"></div>
<div style="position:absolute;left:1940.0px;top:1828.7px;width:31.6px;height:30.3px;background:#1f2127;"></div>
<div style="position:absolute;left:1971.0px;top:1828.7px;width:31.6px;height:30.3px;background:#23252b;"></div>
<div style="position:absolute;left:2002.0px;top:1828.7px;width:31.6px;height:30.3px;background:#24262c;"></div>
<div style="position:absolute;left:2033.0px;top:1828.7px;width:31.6px;height:30.3px;background:#202228;"></div>
<div style="position:absolute;left:1754.0px;top:1859px;width:31.6px;height:31.7px;background:#1c1e24;"></div>
<div style="position:absolute;left:1785.0px;top:1859px;width:31.6px;height:31.7px;background:#1b1d23;"></div>
<div style="position:absolute;left:1816.0px;top:1859px;width:31.6px;height:31.7px;background:#1a1c22;"></div>
<div style="position:absolute;left:1847.0px;top:1859px;width:31.6px;height:31.7px;background:#1a1c22;"></div>
<div style="position:absolute;left:1878.0px;top:1859px;width:31.6px;height:31.7px;background:#1b1d23;"></div>
<div style="position:absolute;left:1909.0px;top:1859px;width:31.6px;height:31.7px;background:#1a1c22;"></div>
<div style="position:absolute;left:1940.0px;top:1859px;width:31.6px;height:31.7px;background:#1b1d23;"></div>
<div style="position:absolute;left:1971.0px;top:1859px;width:31.6px;height:31.7px;background:#1a1c22;"></div>
<div style="position:absolute;left:2002.0px;top:1859px;width:31.6px;height:31.7px;background:#1a1c22;"></div>
<div style="position:absolute;left:2033.0px;top:1859px;width:31.6px;height:31.7px;background:#1b1d23;"></div>
<div style="position:absolute;left:1754.0px;top:1890.7px;width:31.6px;height:30.3px;background:#3c3f48;"></div>
<div style="position:absolute;left:1785.0px;top:1890.7px;width:31.6px;height:30.3px;background:#373a43;"></div>
<div style="position:absolute;left:1816.0px;top:1890.7px;width:31.6px;height:30.3px;background:#3d4049;"></div>
<div style="position:absolute;left:1847.0px;top:1890.7px;width:31.6px;height:30.3px;background:#3a3d46;"></div>
<div style="position:absolute;left:1878.0px;top:1890.7px;width:31.6px;height:30.3px;background:#3e414a;"></div>
<div style="position:absolute;left:1909.0px;top:1890.7px;width:31.6px;height:30.3px;background:#393c45;"></div>
<div style="position:absolute;left:1940.0px;top:1890.7px;width:31.6px;height:30.3px;background:#393c45;"></div>
<div style="position:absolute;left:1971.0px;top:1890.7px;width:31.6px;height:30.3px;background:#3e414a;"></div>
<div style="position:absolute;left:2002.0px;top:1890.7px;width:31.6px;height:30.3px;background:#363942;"></div>
<div style="position:absolute;left:2033.0px;top:1890.7px;width:31.6px;height:30.3px;background:#1c1e24;"></div>
<div style="position:absolute;left:0px;top:0px;width:3384px;height:89px;background:#181b1f;"></div>
<div style="position:absolute;left:0px;top:89px;width:3384px;height:1px;background:#2a2d33;"></div>
<div style="position:absolute;left:0px;top:90px;width:3384px;height:90px;background:#181b1f;"></div>
<div style="position:absolute;left:0px;top:180px;width:3384px;height:2px;background:#25282d;"></div>
<div style="position:absolute;left:0;top:182px;width:3384px;height:6px;background:linear-gradient(rgba(0,0,0,0.45),rgba(0,0,0,0));"></div>
<svg style="position:absolute;left:30px;top:10px;" width="70" height="70" viewBox="0 0 70 70"><defs><linearGradient id="lg" x1="0" y1="1" x2="0" y2="0"><stop offset="0" stop-color="#fbca0a"/><stop offset="0.45" stop-color="#f7931e"/><stop offset="1" stop-color="#f05a28"/></linearGradient></defs>
<path fill="url(#lg)" stroke="url(#lg)" stroke-width="1.2" stroke-linejoin="round" d="M35.6 8.2 L39.4 13 L51 14 L52.4 18.3 L58.7 29.8 L55.3 40.9 L56.7 48 L50.5 51 L46.2 61 L42.3 61.5 L38.5 57.7 L28.8 56.7 L21.2 60.6 L20.2 49 L8.7 41.3 L14.4 33.7 L14 16.8 L26.9 15.9 Z"/>
<path fill="none" stroke="#181b1f" stroke-width="5.4" d="M50.32 30.28 A12.6 12.6 0 1 1 44.82 24.47"/>
<circle cx="40.2" cy="38.6" r="6.9" fill="#181b1f"/></svg>
<div style="position:absolute;left:1290px;top:9px;width:820px;height:68.5px;background:#111217;border:2px solid #303338;border-radius:3px;"></div>
<svg style="position:absolute;left:1308px;top:29px;" width="36" height="34" viewBox="0 0 36 34"><circle cx="16.7" cy="14.4" r="11.6" fill="none" stroke="#8e8f9a" stroke-width="2.6"/><path d="M25 22.8 L31.6 29.4" stroke="#8e8f9a" stroke-width="3" stroke-linecap="round"/></svg>
<div class="t" style="position:absolute;left:1355px;top:27.69px;font-family:'Liberation Sans', sans-serif;font-size:33.8px;line-height:33.8px;color:#8e8f9a;white-space:pre;">Search or jump to...</div>
<svg style="position:absolute;left:1974px;top:34px;" width="36" height="24" viewBox="0 0 36 24"><rect x="3.8" y="2.4" width="29.6" height="18.4" rx="2.2" fill="none" stroke="#8e8f9a" stroke-width="2.8"/><path d="M7.9 8.5h3.2M13.9 8.5h3.2M19.9 8.5h3.2M25.9 8.5h3.3M6.5 14.5h4.2M12.1 14.5h12.1M26.7 14.5h2.8" stroke="#8e8f9a" stroke-width="2.8"/></svg>
<div class="t" style="position:absolute;left:2020px;top:30.50px;font-family:'Liberation Sans', sans-serif;font-size:28px;line-height:28px;color:#8e8f9a;white-space:pre;letter-spacing:1.3px;">ctrl+k</div>
<svg style="position:absolute;left:3012px;top:29px;" width="32" height="32" viewBox="0 0 32 32"><path d="M15.8 1.5 V30 M1.5 15.8 H30" stroke="#8e8f9a" stroke-width="2.8"/></svg>
<svg style="position:absolute;left:3056px;top:37px;" width="22" height="16" viewBox="0 0 22 16"><path d="M4.5 5.5 L11 12 L17.5 5.5" fill="none" stroke="#8e8f9a" stroke-width="2.7"/></svg>
<div style="position:absolute;left:3112.5px;top:18px;width:1.5px;height:54px;background:#34373c;"></div>
<svg style="position:absolute;left:3144px;top:26px;" width="38" height="38" viewBox="0 0 38 38"><circle cx="18.8" cy="18.8" r="16.2" fill="none" stroke="#8e8f9a" stroke-width="2.6"/><path d="M15.2 15.6 a3.9 3.9 0 1 1 5.6 3.5 c-1.2 0.6 -1.9 1.4 -1.9 2.9" fill="none" stroke="#8e8f9a" stroke-width="2.7"/><circle cx="18.9" cy="25.6" r="1.7" fill="#8e8f9a"/></svg>
<svg style="position:absolute;left:3230px;top:28px;" width="38" height="36" viewBox="0 0 38 36"><circle cx="9.8" cy="28.3" r="3.9" fill="none" stroke="#8e8f9a" stroke-width="2.5"/><path d="M7.7 17.5 A13.5 13.5 0 0 1 21.2 31 M7.7 10.5 A20.5 20.5 0 0 1 28.2 31 M7.7 4 A27 27 0 0 1 34.7 31" fill="none" stroke="#8e8f9a" stroke-width="2.7"/></svg>
<svg style="position:absolute;left:3306px;top:18px;" width="54" height="54" viewBox="0 0 54 54"><clipPath id="avc"><circle cx="27" cy="27" r="27"/></clipPath><g clip-path="url(#avc)"><rect width="54" height="54" fill="#4a6a10"/><rect x="5.40" y="5.40" width="5.60" height="5.60" fill="#f48a7c"/><rect x="16.20" y="5.40" width="5.60" height="5.60" fill="#f48a7c"/><rect x="32.40" y="5.40" width="5.60" height="5.60" fill="#f48a7c"/><rect x="43.20" y="5.40" width="5.60" height="5.60" fill="#f48a7c"/><rect x="16.20" y="10.80" width="5.60" height="5.60" fill="#f48a7c"/><rect x="21.60" y="10.80" width="5.60" height="5.60" fill="#f48a7c"/><rect x="27.00" y="10.80" width="5.60" height="5.60" fill="#f48a7c"/><rect x="32.40" y="10.80" width="5.60" height="5.60" fill="#f48a7c"/><rect x="16.20" y="16.20" width="5.60" height="5.60" fill="#f48a7c"/><rect x="32.40" y="16.20" width="5.60" height="5.60" fill="#f48a7c"/><rect x="16.20" y="21.60" width="5.60" height="5.60" fill="#f48a7c"/><rect x="32.40" y="21.60" width="5.60" height="5.60" fill="#f48a7c"/><rect x="5.40" y="27.00" width="5.60" height="5.60" fill="#f48a7c"/><rect x="10.80" y="27.00" width="5.60" height="5.60" fill="#f48a7c"/><rect x="37.80" y="27.00" width="5.60" height="5.60" fill="#f48a7c"/><rect x="43.20" y="27.00" width="5.60" height="5.60" fill="#f48a7c"/><rect x="5.40" y="32.40" width="5.60" height="5.60" fill="#f48a7c"/><rect x="10.80" y="32.40" width="5.60" height="5.60" fill="#f48a7c"/><rect x="21.60" y="32.40" width="5.60" height="5.60" fill="#f48a7c"/><rect x="27.00" y="32.40" width="5.60" height="5.60" fill="#f48a7c"/><rect x="37.80" y="32.40" width="5.60" height="5.60" fill="#f48a7c"/><rect x="43.20" y="32.40" width="5.60" height="5.60" fill="#f48a7c"/><rect x="5.40" y="37.80" width="5.60" height="5.60" fill="#f48a7c"/><rect x="10.80" y="37.80" width="5.60" height="5.60" fill="#f48a7c"/><rect x="16.20" y="37.80" width="5.60" height="5.60" fill="#f48a7c"/><rect x="32.40" y="37.80" width="5.60" height="5.60" fill="#f48a7c"/><rect x="37.80" y="37.80" width="5.60" height="5.60" fill="#f48a7c"/><rect x="43.20" y="37.80" width="5.60" height="5.60" fill="#f48a7c"/><rect x="10.80" y="43.20" width="5.60" height="5.60" fill="#f48a7c"/><rect x="21.60" y="43.20" width="5.60" height="5.60" fill="#f48a7c"/><rect x="27.00" y="43.20" width="5.60" height="5.60" fill="#f48a7c"/><rect x="37.80" y="43.20" width="5.60" height="5.60" fill="#f48a7c"/></g></svg>
<svg style="position:absolute;left:40px;top:120px;" width="48" height="32" viewBox="0 0 48 32"><path d="M3 4 H44 M3 15.5 H44 M3 27 H44" stroke="#ccccdc" stroke-width="4.2" stroke-linecap="round"/></svg>
<div class="t" style="position:absolute;left:125.9px;top:118.70px;font-family:'Liberation Sans', sans-serif;font-size:33.9px;line-height:33.9px;color:#ccccdc;white-space:pre;">Home</div>
<div class="t" style="position:absolute;left:269.7px;top:118.70px;font-family:'Liberation Sans', sans-serif;font-size:33.9px;line-height:33.9px;color:#ccccdc;white-space:pre;">Dashboards</div>
<div class="t" style="position:absolute;left:505.7px;top:118.70px;font-family:'Liberation Sans', sans-serif;font-size:33.9px;line-height:33.9px;color:#ccccdc;white-space:pre;">Self Host Blocks</div>
<div class="t" style="position:absolute;left:808px;top:118.70px;font-family:'Liberation Sans', sans-serif;font-size:33.9px;line-height:33.9px;color:#8e8f9a;white-space:pre;">Errors</div>
<svg style="position:absolute;left:235px;top:127px;" width="16" height="20" viewBox="0 0 16 20"><path d="M3 3 L10 10 L3 17" fill="none" stroke="#8e8f9a" stroke-width="2.6"/></svg>
<svg style="position:absolute;left:471.4px;top:127px;" width="16" height="20" viewBox="0 0 16 20"><path d="M3 3 L10 10 L3 17" fill="none" stroke="#8e8f9a" stroke-width="2.6"/></svg>
<svg style="position:absolute;left:773.2px;top:127px;" width="16" height="20" viewBox="0 0 16 20"><path d="M3 3 L10 10 L3 17" fill="none" stroke="#8e8f9a" stroke-width="2.6"/></svg>
<svg style="position:absolute;left:936px;top:118px;" width="38" height="36" viewBox="0 0 38 36"><path d="M19 3 L23.5 13 L34.5 14 L26.2 21.4 L28.7 32.3 L19 26.6 L9.3 32.3 L11.8 21.4 L3.5 14 L14.5 13 Z" fill="none" stroke="#ccccdc" stroke-width="3" stroke-linejoin="round"/></svg>
<svg style="position:absolute;left:1012px;top:118px;" width="39" height="36" viewBox="0 0 39 36"><circle cx="29.6" cy="8.1" r="4.9" fill="none" stroke="#ccccdc" stroke-width="3.2"/><circle cx="8.8" cy="18.1" r="4.9" fill="none" stroke="#ccccdc" stroke-width="3.2"/><circle cx="29.6" cy="28.2" r="4.9" fill="none" stroke="#ccccdc" stroke-width="3.2"/><path d="M13.3 16 L25.2 10.2 M13.3 20.2 L25.2 26.1" stroke="#ccccdc" stroke-width="4"/></svg>
<svg style="position:absolute;left:2276px;top:124px;" width="44" height="24" viewBox="0 0 44 24"><rect x="0.8" y="8.2" width="6.4" height="14.8" fill="#5794f2"/><rect x="8.7" y="4.4" width="6.3" height="18.6" fill="#5794f2"/><rect x="15.9" y="11.9" width="5.5" height="11.1" fill="#5794f2"/><rect x="23.2" y="1.1" width="5.7" height="21.9" fill="#5794f2"/><path d="M34.7 4.1 V19.7 M27.4 11.9 H42" stroke="#ff9830" stroke-width="4"/></svg>
<div class="t" style="position:absolute;left:2330.5px;top:117.60px;font-family:'Liberation Sans', sans-serif;font-size:34.5px;line-height:34.5px;color:#6e9fff;white-space:pre;">Add</div>
<svg style="position:absolute;left:2400px;top:128px;" width="24" height="16" viewBox="0 0 24 16"><path d="M3 3 L12 12 L21 3" fill="none" stroke="#6e9fff" stroke-width="3"/></svg>
<svg style="position:absolute;left:2483px;top:119px;" width="35" height="35" viewBox="0 0 35 35"><path d="M4 3 H24 L32 11 V29 a3 3 0 0 1 -3 3 H5 a3 3 0 0 1 -3 -3 V5 a2 2 0 0 1 2 -2 Z" fill="none" stroke="#8e8f9a" stroke-width="3"/><path d="M9 3.5 V10 H19 V3.5 M9 31.5 V21 H25 V31.5" fill="none" stroke="#8e8f9a" stroke-width="3"/></svg>
<svg style="position:absolute;left:2579px;top:118px;" width="37" height="37" viewBox="0 0 37 37"><path d="M15.5 2.5 H21.5 L22.6 7.4 L26.6 9.7 L31.3 8.2 L34.3 13.4 L30.7 16.8 V21.2 L34.3 24.6 L31.3 29.8 L26.6 28.3 L22.6 30.6 L21.5 34.5 H15.5 L14.4 30.6 L10.4 28.3 L5.7 29.8 L2.7 24.6 L6.3 21.2 V16.8 L2.7 13.4 L5.7 8.2 L10.4 9.7 L14.4 7.4 Z" fill="none" stroke="#8e8f9a" stroke-width="3" stroke-linejoin="round"/><circle cx="18.5" cy="18.5" r="5" fill="none" stroke="#8e8f9a" stroke-width="3"/></svg>
<svg style="position:absolute;left:2677px;top:118px;" width="37" height="37" viewBox="0 0 37 37"><circle cx="18.5" cy="18.5" r="15.5" fill="none" stroke="#8e8f9a" stroke-width="3"/><path d="M18.5 9 V18.5 H12" fill="none" stroke="#8e8f9a" stroke-width="3"/></svg>
<div class="t" style="position:absolute;left:2731.8px;top:118.80px;font-family:'Liberation Sans', sans-serif;font-size:34.5px;line-height:34.5px;color:#8e8f9a;white-space:pre;">Last 24 hours</div>
<svg style="position:absolute;left:2975px;top:128px;" width="22" height="16" viewBox="0 0 22 16"><path d="M2.5 3.5 L10.5 11.5 L18.5 3.5" fill="none" stroke="#8e8f9a" stroke-width="3"/></svg>
<svg style="position:absolute;left:3042px;top:118px;" width="38" height="37" viewBox="0 0 38 37"><circle cx="17.5" cy="16.4" r="13.9" fill="none" stroke="#8e8f9a" stroke-width="2.8"/><path d="M27 26 L34 33.2" stroke="#8e8f9a" stroke-width="3" stroke-linecap="round"/><path d="M9.1 16.4 H25.8" stroke="#8e8f9a" stroke-width="4.2"/></svg>
<svg style="position:absolute;left:3140px;top:118px;" width="38" height="37" viewBox="0 0 38 37"><path d="M7.33 6.63 A15.8 15.8 0 0 1 34.3 17.8 M2.7 17.8 A15.8 15.8 0 0 0 29.67 28.97" fill="none" stroke="#8e8f9a" stroke-width="2.9"/><path d="M3.9 1 V12.3 H15.2 Z M21.4 23.4 H33.6 V35.2 Z" fill="#8e8f9a"/></svg>
<svg style="position:absolute;left:3223px;top:128px;" width="22" height="16" viewBox="0 0 22 16"><path d="M2.5 3.5 L10.5 11.5 L18.5 3.5" fill="none" stroke="#8e8f9a" stroke-width="3"/></svg>
<div style="position:absolute;left:3281px;top:108px;width:2px;height:54px;background:#2c2f35;"></div>
<svg style="position:absolute;left:3314px;top:128px;" width="30" height="20" viewBox="0 0 30 20"><path d="M3.5 16 L14.5 5 L25.5 16" fill="none" stroke="#8e8f9a" stroke-width="4.2"/></svg>
</body></html>
